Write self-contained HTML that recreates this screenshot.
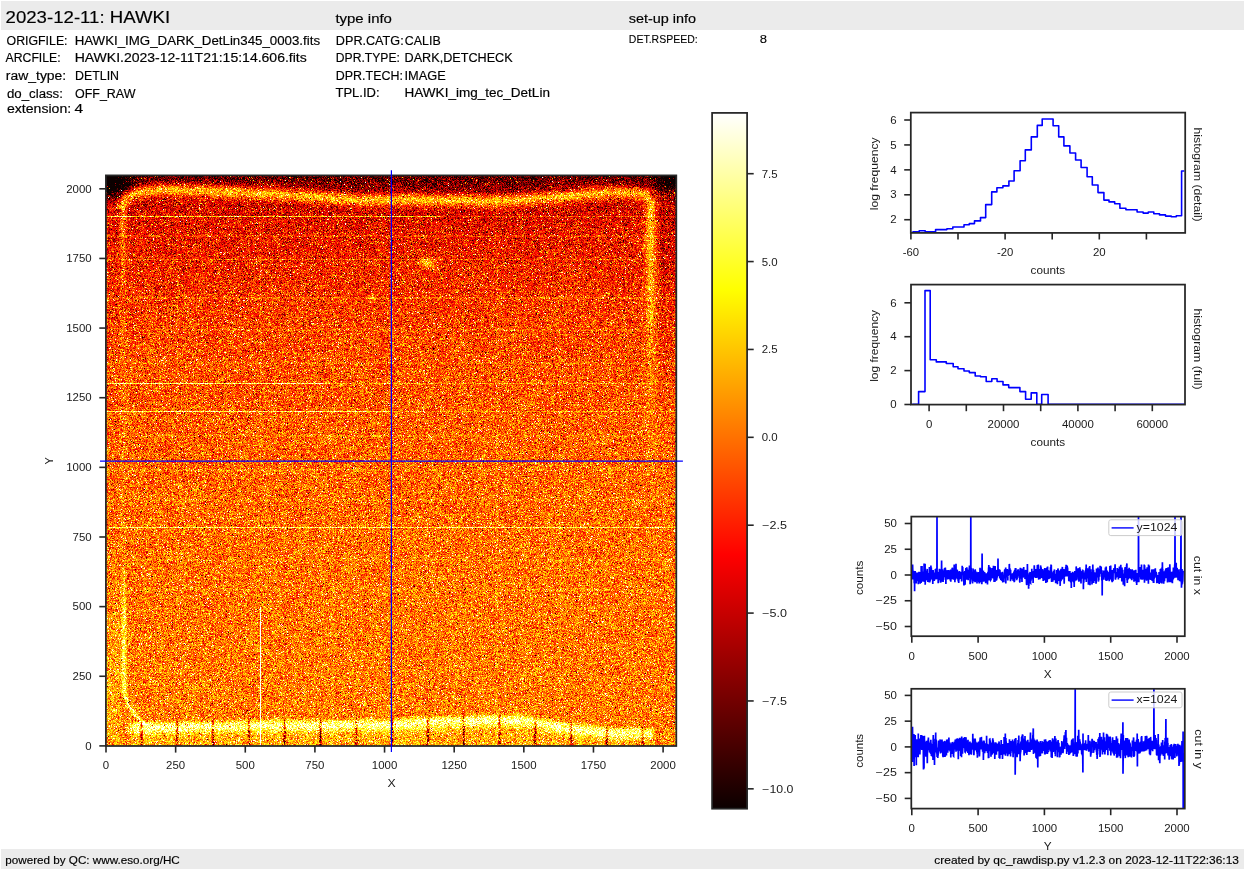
<!DOCTYPE html>
<html><head><meta charset="utf-8">
<style>
html,body{margin:0;padding:0;background:#fff;}
body{width:1245px;height:870px;position:relative;overflow:hidden;font-family:"Liberation Sans", sans-serif;}
.band{position:absolute;background:#ebebeb;}
#hm{position:absolute;left:106px;top:175px;width:570px;height:571px;background:linear-gradient(rgb(120,20,2) 0%,rgb(200,45,4) 4%,rgb(215,50,4) 10%,rgb(235,68,5) 20%,rgb(245,88,7) 30%,rgb(246,100,9) 40%,rgb(246,106,10) 50%,rgb(249,116,9) 60%,rgb(251,121,9) 70%,rgb(251,128,10) 85%,rgb(250,140,20) 92%,rgb(252,215,90) 95%,rgb(248,185,50) 100%);}
#cb{position:absolute;left:712px;top:113px;width:35px;height:696px;background:linear-gradient(to top, rgb(11,0,0) 0%, rgb(255,0,0) 36.5%, rgb(255,255,0) 74.6%, rgb(255,255,255) 100%);}
svg{position:absolute;left:0;top:0;}
text{font-family:"Liberation Sans", sans-serif;fill:#000;stroke:#000;stroke-width:0.16px;}
text.md{stroke-width:0.1px;}
text.sm{stroke:none;fill:#1a1a1a;}
</style></head><body>
<div class="band" style="left:1px;top:1px;width:1243px;height:28.5px"></div>
<div class="band" style="left:1px;top:849px;width:1243px;height:19.5px"></div>
<canvas id="hm" width="570" height="571"></canvas>
<div id="cb"></div>
<svg width="1245" height="870" viewBox="0 0 1245 870">
<path d="M911.6,232.2 H913.2 V231.8 H919.2 V230.8 H925.2 V231.8 H935.6 V229.6 H946.9 V228.8 H952.8 V227.0 H964.0 V224.8 H969.3 V223.6 H974.5 V220.9 H980.5 V217.6 H985.7 V204.6 H991.7 V191.9 H996.9 V187.7 H1002.9 V185.9 H1008.9 V181.0 H1014.1 V170.8 H1020.1 V160.8 H1025.3 V149.9 H1031.3 V136.9 H1037.3 V125.4 H1042.2 V119.0 H1053.1 V125.7 H1058.7 V136.9 H1063.9 V145.9 H1069.9 V153.0 H1075.6 V160.0 H1081.1 V167.5 H1087.1 V176.8 H1092.3 V185.0 H1098.0 V192.6 H1103.9 V200.1 H1109.0 V201.9 H1114.7 V203.8 H1119.9 V208.2 H1125.9 V209.8 H1137.1 V212.0 H1143.1 V213.1 H1148.3 V212.0 H1153.8 V213.8 H1159.5 V214.9 H1165.5 V216.1 H1171.2 V216.8 H1176.3 V215.8 H1181.6 V171.0 H1184.4" fill="none" stroke="#0000ff" stroke-width="1.6" stroke-linejoin="round"/>
<path d="M912.2,404.2 H918.6 V391.6 H925.0 V290.6 H930.2 V359.8 H936.3 V361.9 H946.3 V363.5 H953.2 V366.7 H958.0 V368.8 H964.0 V371.0 H969.3 V372.6 H975.2 V376.0 H980.5 V376.7 H986.2 V381.5 H991.8 V378.7 H997.1 V381.5 H1003.0 V384.9 H1008.7 V387.6 H1019.9 V391.6 H1025.6 V399.3 H1031.2 V392.9 H1036.8 V404.2 H1041.7 V394.5 H1048.1 V404.2 H1184.4" fill="none" stroke="#0000ff" stroke-width="1.6" stroke-linejoin="round"/>
<path d="M911.8,577.9 L911.9,575.6 L912.1,570.4 L912.2,574.2 L912.3,575.4 L912.5,579.4 L912.6,564.5 L912.7,568.4 L912.9,574.9 L913.0,572.4 L913.1,573.7 L913.3,579.5 L913.4,575.3 L913.5,570.7 L913.7,574.6 L913.8,579.5 L913.9,571.9 L914.1,575.4 L914.2,583.2 L914.3,577.9 L914.5,572.5 L914.6,591.2 L914.7,577.3 L914.8,571.7 L915.0,574.5 L915.1,574.3 L915.2,571.1 L915.4,579.8 L915.5,577.8 L915.6,577.9 L915.8,578.9 L915.9,580.2 L916.0,575.1 L916.2,583.5 L916.3,580.7 L916.4,575.9 L916.6,580.9 L916.7,575.9 L916.8,572.5 L917.0,577.1 L917.1,578.8 L917.2,573.5 L917.4,575.7 L917.5,575.6 L917.6,576.8 L917.8,577.9 L917.9,573.3 L918.0,572.5 L918.2,574.2 L918.3,584.2 L918.4,581.8 L918.6,576.9 L918.7,577.0 L918.8,578.4 L919.0,571.8 L919.1,574.2 L919.2,579.8 L919.4,578.0 L919.5,575.9 L919.6,576.6 L919.8,579.3 L919.9,572.9 L920.0,577.2 L920.2,583.8 L920.3,575.6 L920.4,578.3 L920.6,572.0 L920.7,578.1 L920.8,575.6 L920.9,576.8 L921.1,583.0 L921.2,565.9 L921.3,577.5 L921.5,569.3 L921.6,570.7 L921.7,571.9 L921.9,574.8 L922.0,566.1 L922.1,576.1 L922.3,581.1 L922.4,575.3 L922.5,575.4 L922.7,579.9 L922.8,579.8 L922.9,575.7 L923.1,577.4 L923.2,581.7 L923.3,580.4 L923.5,571.6 L923.6,575.7 L923.7,573.0 L923.9,578.6 L924.0,572.7 L924.1,563.5 L924.3,573.3 L924.4,579.2 L924.5,572.1 L924.7,569.8 L924.8,575.0 L924.9,582.0 L925.1,563.7 L925.2,584.8 L925.3,580.1 L925.5,577.7 L925.6,572.5 L925.7,577.1 L925.9,580.4 L926.0,577.6 L926.1,575.9 L926.3,575.8 L926.4,572.8 L926.5,579.1 L926.7,579.2 L926.8,571.7 L926.9,570.7 L927.0,571.7 L927.2,568.9 L927.3,572.9 L927.4,578.2 L927.6,577.2 L927.7,575.0 L927.8,582.1 L928.0,574.8 L928.1,574.2 L928.2,577.2 L928.4,574.0 L928.5,573.1 L928.6,576.3 L928.8,574.8 L928.9,577.7 L929.0,582.2 L929.2,577.7 L929.3,576.1 L929.4,567.0 L929.6,582.6 L929.7,576.2 L929.8,582.2 L930.0,577.8 L930.1,577.4 L930.2,580.6 L930.4,576.3 L930.5,580.0 L930.6,572.9 L930.8,574.4 L930.9,565.5 L931.0,571.2 L931.2,576.2 L931.3,567.5 L931.4,571.8 L931.6,574.1 L931.7,573.0 L931.8,578.7 L932.0,570.9 L932.1,570.0 L932.2,578.6 L932.4,579.1 L932.5,573.4 L932.6,571.7 L932.8,583.9 L932.9,574.0 L933.0,575.6 L933.1,570.0 L933.3,579.3 L933.4,576.6 L933.5,576.9 L933.7,572.9 L933.8,574.8 L933.9,580.1 L934.1,577.3 L934.2,574.6 L934.3,581.1 L934.5,573.8 L934.6,572.4 L934.7,577.8 L934.9,574.5 L935.0,575.4 L935.1,578.4 L935.3,574.2 L935.4,569.1 L935.5,574.8 L935.7,579.4 L935.8,577.2 L935.9,574.0 L936.1,568.6 L936.2,570.7 L936.3,577.6 L936.5,568.4 L936.6,577.0 L936.7,574.8 L936.9,575.0 L937.0,516.4 L937.1,573.3 L937.3,571.8 L937.4,579.1 L937.5,576.8 L937.7,573.8 L937.8,577.5 L937.9,572.9 L938.1,572.0 L938.2,583.2 L938.3,574.5 L938.5,575.9 L938.6,578.4 L938.7,578.6 L938.9,578.7 L939.0,578.9 L939.1,575.6 L939.2,579.0 L939.4,568.8 L939.5,580.2 L939.6,576.3 L939.8,570.1 L939.9,570.1 L940.0,573.2 L940.2,575.5 L940.3,570.4 L940.4,582.4 L940.6,579.8 L940.7,582.7 L940.8,577.0 L941.0,572.3 L941.1,571.7 L941.2,576.6 L941.4,581.8 L941.5,570.1 L941.6,560.6 L941.8,580.4 L941.9,578.5 L942.0,570.8 L942.2,572.3 L942.3,576.9 L942.4,571.5 L942.6,569.3 L942.7,580.3 L942.8,572.3 L943.0,578.2 L943.1,582.1 L943.2,574.7 L943.4,572.5 L943.5,579.7 L943.6,579.5 L943.8,575.5 L943.9,577.3 L944.0,572.1 L944.2,570.4 L944.3,577.1 L944.4,574.5 L944.6,568.1 L944.7,571.6 L944.8,573.3 L944.9,570.8 L945.1,570.9 L945.2,573.0 L945.3,567.5 L945.5,570.2 L945.6,570.3 L945.7,573.9 L945.9,584.0 L946.0,575.1 L946.1,577.6 L946.3,570.8 L946.4,574.0 L946.5,575.6 L946.7,576.9 L946.8,574.5 L946.9,570.2 L947.1,571.1 L947.2,573.8 L947.3,576.6 L947.5,577.2 L947.6,573.4 L947.7,579.4 L947.9,577.6 L948.0,578.6 L948.1,574.4 L948.3,576.2 L948.4,573.8 L948.5,574.7 L948.7,570.1 L948.8,578.5 L948.9,578.9 L949.1,572.0 L949.2,575.5 L949.3,571.1 L949.5,578.2 L949.6,577.0 L949.7,574.4 L949.9,570.5 L950.0,571.1 L950.1,579.8 L950.3,572.6 L950.4,580.8 L950.5,575.7 L950.7,569.6 L950.8,581.8 L950.9,578.8 L951.0,574.6 L951.2,575.1 L951.3,573.8 L951.4,574.4 L951.6,577.5 L951.7,576.3 L951.8,572.5 L952.0,579.1 L952.1,576.6 L952.2,567.8 L952.4,568.6 L952.5,573.6 L952.6,571.0 L952.8,574.6 L952.9,578.4 L953.0,573.8 L953.2,572.2 L953.3,575.1 L953.4,578.8 L953.6,579.4 L953.7,574.9 L953.8,575.5 L954.0,571.4 L954.1,573.1 L954.2,564.6 L954.4,579.5 L954.5,571.1 L954.6,577.9 L954.8,572.9 L954.9,582.2 L955.0,577.2 L955.2,576.9 L955.3,577.3 L955.4,579.6 L955.6,578.6 L955.7,575.5 L955.8,575.3 L956.0,563.8 L956.1,572.4 L956.2,575.2 L956.4,577.2 L956.5,578.4 L956.6,575.8 L956.8,569.6 L956.9,573.7 L957.0,575.7 L957.1,571.4 L957.3,569.8 L957.4,577.9 L957.5,574.4 L957.7,575.0 L957.8,579.2 L957.9,574.8 L958.1,578.8 L958.2,581.5 L958.3,576.3 L958.5,575.4 L958.6,571.9 L958.7,582.9 L958.9,576.0 L959.0,574.5 L959.1,571.9 L959.3,579.5 L959.4,570.9 L959.5,575.7 L959.7,571.5 L959.8,572.4 L959.9,573.8 L960.1,575.6 L960.2,575.3 L960.3,576.1 L960.5,579.0 L960.6,573.3 L960.7,574.6 L960.9,575.2 L961.0,578.1 L961.1,572.0 L961.3,577.7 L961.4,575.4 L961.5,574.0 L961.7,581.5 L961.8,578.3 L961.9,580.4 L962.1,572.6 L962.2,565.7 L962.3,574.4 L962.5,569.3 L962.6,572.3 L962.7,566.9 L962.9,575.2 L963.0,573.3 L963.1,574.4 L963.2,574.4 L963.4,573.3 L963.5,574.9 L963.6,571.9 L963.8,572.5 L963.9,585.4 L964.0,573.6 L964.2,585.2 L964.3,579.1 L964.4,577.2 L964.6,580.1 L964.7,577.1 L964.8,570.9 L965.0,580.3 L965.1,584.8 L965.2,577.3 L965.4,575.8 L965.5,574.9 L965.6,578.0 L965.8,569.4 L965.9,568.0 L966.0,578.8 L966.2,577.2 L966.3,574.5 L966.4,579.6 L966.6,574.6 L966.7,567.8 L966.8,567.3 L967.0,569.6 L967.1,576.5 L967.2,570.4 L967.4,569.5 L967.5,577.6 L967.6,574.5 L967.8,570.4 L967.9,574.0 L968.0,575.3 L968.2,580.2 L968.3,574.4 L968.4,570.3 L968.6,570.7 L968.7,571.9 L968.8,572.2 L969.0,573.0 L969.1,577.9 L969.2,569.8 L969.3,569.9 L969.5,565.6 L969.6,576.0 L969.7,568.9 L969.9,569.9 L970.0,570.2 L970.1,584.3 L970.3,577.3 L970.4,576.1 L970.5,574.0 L970.7,572.1 L970.8,516.4 L970.9,569.3 L971.1,567.9 L971.2,569.0 L971.3,576.5 L971.5,576.6 L971.6,579.5 L971.7,576.6 L971.9,576.7 L972.0,575.9 L972.1,580.0 L972.3,582.2 L972.4,576.5 L972.5,583.4 L972.7,581.0 L972.8,581.8 L972.9,574.0 L973.1,568.4 L973.2,577.3 L973.3,576.3 L973.5,573.8 L973.6,570.2 L973.7,576.8 L973.9,578.1 L974.0,573.4 L974.1,581.4 L974.3,579.0 L974.4,574.6 L974.5,572.0 L974.7,572.0 L974.8,578.0 L974.9,577.4 L975.1,582.2 L975.2,569.2 L975.3,580.5 L975.4,573.6 L975.6,570.7 L975.7,581.5 L975.8,575.5 L976.0,573.3 L976.1,574.1 L976.2,576.3 L976.4,573.7 L976.5,573.6 L976.6,577.3 L976.8,576.5 L976.9,573.6 L977.0,583.6 L977.2,575.5 L977.3,576.8 L977.4,574.2 L977.6,572.3 L977.7,573.2 L977.8,576.9 L978.0,574.0 L978.1,576.6 L978.2,573.9 L978.4,579.4 L978.5,575.9 L978.6,571.9 L978.8,581.3 L978.9,581.4 L979.0,574.8 L979.2,583.4 L979.3,578.6 L979.4,574.6 L979.6,578.6 L979.7,572.2 L979.8,579.6 L980.0,567.7 L980.1,571.0 L980.2,577.2 L980.4,573.4 L980.5,574.0 L980.6,568.5 L980.8,575.3 L980.9,582.0 L981.0,576.5 L981.1,582.2 L981.3,581.3 L981.4,583.1 L981.5,574.5 L981.7,569.4 L981.8,584.2 L981.9,582.9 L982.1,553.4 L982.2,572.5 L982.3,579.8 L982.5,572.9 L982.6,576.6 L982.7,577.0 L982.9,576.2 L983.0,573.0 L983.1,573.5 L983.3,570.8 L983.4,571.2 L983.5,581.7 L983.7,580.1 L983.8,578.3 L983.9,581.5 L984.1,579.1 L984.2,580.0 L984.3,574.3 L984.5,575.6 L984.6,572.1 L984.7,578.2 L984.9,575.5 L985.0,576.1 L985.1,577.4 L985.3,579.8 L985.4,580.6 L985.5,576.3 L985.7,583.2 L985.8,580.9 L985.9,580.1 L986.1,579.2 L986.2,573.3 L986.3,578.5 L986.5,575.7 L986.6,580.5 L986.7,579.4 L986.9,580.5 L987.0,576.5 L987.1,578.4 L987.2,578.2 L987.4,577.1 L987.5,584.5 L987.6,577.6 L987.8,576.6 L987.9,572.6 L988.0,571.8 L988.2,573.3 L988.3,577.5 L988.4,574.8 L988.6,567.4 L988.7,573.9 L988.8,565.0 L989.0,575.0 L989.1,574.6 L989.2,580.4 L989.4,570.1 L989.5,566.7 L989.6,577.6 L989.8,570.9 L989.9,575.3 L990.0,567.7 L990.2,568.3 L990.3,579.7 L990.4,574.0 L990.6,570.2 L990.7,571.7 L990.8,579.8 L991.0,579.5 L991.1,576.0 L991.2,572.3 L991.4,577.1 L991.5,571.2 L991.6,571.7 L991.8,571.9 L991.9,572.7 L992.0,567.9 L992.2,572.7 L992.3,572.4 L992.4,575.4 L992.6,568.4 L992.7,577.9 L992.8,570.7 L993.0,578.4 L993.1,569.8 L993.2,570.0 L993.3,571.1 L993.5,565.7 L993.6,572.1 L993.7,573.6 L993.9,577.9 L994.0,571.2 L994.1,581.9 L994.3,580.2 L994.4,574.6 L994.5,568.5 L994.7,572.5 L994.8,571.7 L994.9,582.1 L995.1,566.0 L995.2,571.2 L995.3,578.9 L995.5,572.6 L995.6,573.3 L995.7,580.3 L995.9,569.9 L996.0,571.3 L996.1,579.2 L996.3,580.4 L996.4,580.1 L996.5,574.4 L996.7,579.0 L996.8,579.0 L996.9,573.4 L997.1,577.7 L997.2,574.9 L997.3,571.3 L997.5,574.4 L997.6,570.1 L997.7,570.5 L997.9,571.1 L998.0,558.6 L998.1,570.8 L998.3,576.2 L998.4,571.9 L998.5,570.1 L998.7,569.6 L998.8,575.1 L998.9,569.0 L999.1,574.8 L999.2,570.7 L999.3,570.9 L999.4,574.5 L999.6,570.8 L999.7,578.6 L999.8,572.3 L1000.0,572.0 L1000.1,576.3 L1000.2,572.3 L1000.4,575.1 L1000.5,574.4 L1000.6,572.3 L1000.8,580.1 L1000.9,573.2 L1001.0,576.9 L1001.2,578.7 L1001.3,574.2 L1001.4,572.9 L1001.6,580.7 L1001.7,580.5 L1001.8,579.0 L1002.0,575.2 L1002.1,572.6 L1002.2,580.0 L1002.4,578.9 L1002.5,571.7 L1002.6,580.1 L1002.8,582.4 L1002.9,574.7 L1003.0,578.7 L1003.2,576.5 L1003.3,580.7 L1003.4,575.3 L1003.6,578.4 L1003.7,578.0 L1003.8,582.3 L1004.0,576.6 L1004.1,576.8 L1004.2,578.4 L1004.4,573.0 L1004.5,576.9 L1004.6,570.6 L1004.8,569.4 L1004.9,571.8 L1005.0,572.3 L1005.2,574.2 L1005.3,577.5 L1005.4,571.7 L1005.5,573.4 L1005.7,567.6 L1005.8,583.5 L1005.9,577.7 L1006.1,571.1 L1006.2,574.9 L1006.3,573.6 L1006.5,574.5 L1006.6,573.2 L1006.7,570.6 L1006.9,570.6 L1007.0,574.0 L1007.1,569.1 L1007.3,573.7 L1007.4,576.6 L1007.5,577.4 L1007.7,572.4 L1007.8,580.4 L1007.9,569.5 L1008.1,576.1 L1008.2,571.6 L1008.3,575.0 L1008.5,573.3 L1008.6,573.7 L1008.7,572.8 L1008.9,573.6 L1009.0,573.7 L1009.1,572.8 L1009.3,563.9 L1009.4,564.4 L1009.5,572.3 L1009.7,573.1 L1009.8,572.8 L1009.9,568.3 L1010.1,571.4 L1010.2,571.5 L1010.3,572.4 L1010.5,581.2 L1010.6,569.8 L1010.7,576.0 L1010.9,576.1 L1011.0,574.0 L1011.1,575.3 L1011.2,574.2 L1011.4,576.8 L1011.5,579.5 L1011.6,577.5 L1011.8,574.1 L1011.9,574.9 L1012.0,575.1 L1012.2,573.5 L1012.3,578.2 L1012.4,574.7 L1012.6,576.0 L1012.7,573.2 L1012.8,575.1 L1013.0,578.2 L1013.1,577.3 L1013.2,581.1 L1013.4,575.8 L1013.5,572.9 L1013.6,573.3 L1013.8,572.8 L1013.9,573.1 L1014.0,576.8 L1014.2,582.3 L1014.3,580.8 L1014.4,581.4 L1014.6,580.8 L1014.7,577.8 L1014.8,569.7 L1015.0,571.0 L1015.1,572.6 L1015.2,576.0 L1015.4,567.9 L1015.5,573.9 L1015.6,571.5 L1015.8,576.4 L1015.9,568.2 L1016.0,574.2 L1016.2,571.2 L1016.3,575.7 L1016.4,578.4 L1016.6,574.7 L1016.7,575.9 L1016.8,580.2 L1017.0,575.8 L1017.1,579.1 L1017.2,572.7 L1017.3,571.7 L1017.5,573.1 L1017.6,570.9 L1017.7,573.2 L1017.9,569.6 L1018.0,576.0 L1018.1,570.5 L1018.3,569.3 L1018.4,570.3 L1018.5,576.4 L1018.7,573.8 L1018.8,574.4 L1018.9,571.6 L1019.1,572.2 L1019.2,578.1 L1019.3,572.5 L1019.5,571.0 L1019.6,574.6 L1019.7,581.6 L1019.9,582.5 L1020.0,572.8 L1020.1,574.7 L1020.3,567.8 L1020.4,576.9 L1020.5,572.7 L1020.7,567.9 L1020.8,573.3 L1020.9,574.6 L1021.1,575.4 L1021.2,572.1 L1021.3,570.3 L1021.5,573.9 L1021.6,578.8 L1021.7,576.7 L1021.9,578.3 L1022.0,582.1 L1022.1,568.8 L1022.3,572.6 L1022.4,575.8 L1022.5,575.8 L1022.7,576.0 L1022.8,568.5 L1022.9,577.3 L1023.1,575.0 L1023.2,577.4 L1023.3,575.9 L1023.4,574.0 L1023.6,575.6 L1023.7,567.0 L1023.8,572.5 L1024.0,574.0 L1024.1,575.1 L1024.2,572.4 L1024.4,571.9 L1024.5,571.4 L1024.6,575.1 L1024.8,573.7 L1024.9,570.3 L1025.0,579.1 L1025.2,574.5 L1025.3,573.9 L1025.4,577.2 L1025.6,572.6 L1025.7,569.9 L1025.8,577.6 L1026.0,575.6 L1026.1,578.7 L1026.2,575.3 L1026.4,578.5 L1026.5,583.1 L1026.6,584.5 L1026.8,585.0 L1026.9,578.7 L1027.0,576.8 L1027.2,577.6 L1027.3,579.4 L1027.4,564.0 L1027.6,576.1 L1027.7,581.8 L1027.8,579.0 L1028.0,578.3 L1028.1,577.7 L1028.2,575.0 L1028.4,577.2 L1028.5,578.8 L1028.6,588.7 L1028.8,583.3 L1028.9,586.1 L1029.0,575.3 L1029.2,579.4 L1029.3,575.3 L1029.4,573.3 L1029.5,578.0 L1029.7,572.7 L1029.8,574.7 L1029.9,578.6 L1030.1,571.9 L1030.2,580.3 L1030.3,574.0 L1030.5,583.0 L1030.6,583.1 L1030.7,573.7 L1030.9,577.6 L1031.0,580.8 L1031.1,579.1 L1031.3,579.5 L1031.4,573.5 L1031.5,575.6 L1031.7,579.2 L1031.8,568.7 L1031.9,577.0 L1032.1,572.0 L1032.2,576.9 L1032.3,571.2 L1032.5,575.4 L1032.6,576.1 L1032.7,577.5 L1032.9,575.1 L1033.0,574.4 L1033.1,583.1 L1033.3,572.9 L1033.4,575.3 L1033.5,575.6 L1033.7,571.0 L1033.8,574.2 L1033.9,575.5 L1034.1,576.9 L1034.2,567.0 L1034.3,565.4 L1034.5,571.9 L1034.6,572.6 L1034.7,572.6 L1034.9,572.0 L1035.0,571.9 L1035.1,577.3 L1035.3,570.8 L1035.4,578.1 L1035.5,573.8 L1035.6,569.1 L1035.8,575.5 L1035.9,570.4 L1036.0,569.2 L1036.2,573.0 L1036.3,571.1 L1036.4,576.0 L1036.6,574.6 L1036.7,577.9 L1036.8,573.0 L1037.0,571.9 L1037.1,571.8 L1037.2,569.8 L1037.4,565.1 L1037.5,575.3 L1037.6,569.5 L1037.8,569.3 L1037.9,570.8 L1038.0,576.2 L1038.2,577.5 L1038.3,564.5 L1038.4,573.8 L1038.6,576.4 L1038.7,579.6 L1038.8,573.9 L1039.0,569.4 L1039.1,574.4 L1039.2,572.8 L1039.4,578.9 L1039.5,575.0 L1039.6,568.9 L1039.8,574.7 L1039.9,569.0 L1040.0,579.3 L1040.2,572.9 L1040.3,569.9 L1040.4,572.1 L1040.6,567.5 L1040.7,565.4 L1040.8,572.0 L1041.0,572.3 L1041.1,567.3 L1041.2,570.6 L1041.4,573.6 L1041.5,577.8 L1041.6,576.8 L1041.7,574.9 L1041.9,569.1 L1042.0,576.4 L1042.1,572.7 L1042.3,571.1 L1042.4,578.3 L1042.5,575.8 L1042.7,576.5 L1042.8,569.3 L1042.9,578.4 L1043.1,571.6 L1043.2,581.0 L1043.3,578.4 L1043.5,578.3 L1043.6,576.5 L1043.7,576.8 L1043.9,579.0 L1044.0,575.8 L1044.1,580.5 L1044.3,575.8 L1044.4,575.2 L1044.5,571.5 L1044.7,568.9 L1044.8,568.0 L1044.9,568.8 L1045.1,579.7 L1045.2,568.2 L1045.3,574.2 L1045.5,577.7 L1045.6,576.1 L1045.7,574.5 L1045.9,583.0 L1046.0,576.0 L1046.1,574.3 L1046.3,570.3 L1046.4,574.1 L1046.5,575.3 L1046.7,578.4 L1046.8,575.9 L1046.9,567.5 L1047.1,576.2 L1047.2,582.2 L1047.3,578.5 L1047.4,578.5 L1047.6,566.4 L1047.7,575.6 L1047.8,570.2 L1048.0,572.3 L1048.1,574.1 L1048.2,571.1 L1048.4,577.4 L1048.5,574.7 L1048.6,579.2 L1048.8,577.4 L1048.9,577.0 L1049.0,571.5 L1049.2,570.6 L1049.3,573.5 L1049.4,578.7 L1049.6,574.9 L1049.7,575.0 L1049.8,574.8 L1050.0,574.3 L1050.1,577.0 L1050.2,571.7 L1050.4,575.2 L1050.5,567.2 L1050.6,576.6 L1050.8,577.9 L1050.9,572.2 L1051.0,564.6 L1051.2,571.7 L1051.3,565.0 L1051.4,576.8 L1051.6,582.0 L1051.7,573.4 L1051.8,574.9 L1052.0,577.9 L1052.1,572.8 L1052.2,572.3 L1052.4,577.6 L1052.5,580.8 L1052.6,579.5 L1052.8,581.8 L1052.9,573.6 L1053.0,577.2 L1053.2,578.7 L1053.3,579.4 L1053.4,575.3 L1053.5,570.8 L1053.7,579.6 L1053.8,580.2 L1053.9,575.0 L1054.1,580.0 L1054.2,575.7 L1054.3,574.9 L1054.5,569.4 L1054.6,579.4 L1054.7,576.2 L1054.9,576.7 L1055.0,577.3 L1055.1,580.3 L1055.3,573.9 L1055.4,575.3 L1055.5,576.7 L1055.7,583.2 L1055.8,575.8 L1055.9,575.9 L1056.1,579.2 L1056.2,574.8 L1056.3,581.3 L1056.5,579.4 L1056.6,575.1 L1056.7,569.9 L1056.9,574.7 L1057.0,578.5 L1057.1,576.9 L1057.3,570.7 L1057.4,584.3 L1057.5,581.7 L1057.7,579.5 L1057.8,577.2 L1057.9,568.5 L1058.1,569.8 L1058.2,577.4 L1058.3,580.9 L1058.5,573.7 L1058.6,575.1 L1058.7,579.3 L1058.9,578.6 L1059.0,575.2 L1059.1,578.6 L1059.3,575.5 L1059.4,575.3 L1059.5,570.5 L1059.6,580.2 L1059.8,572.7 L1059.9,575.4 L1060.0,580.0 L1060.2,585.9 L1060.3,575.8 L1060.4,573.1 L1060.6,580.9 L1060.7,569.6 L1060.8,577.8 L1061.0,581.2 L1061.1,578.8 L1061.2,568.7 L1061.4,572.1 L1061.5,575.4 L1061.6,576.1 L1061.8,571.2 L1061.9,572.5 L1062.0,577.7 L1062.2,579.5 L1062.3,567.4 L1062.4,566.9 L1062.6,578.4 L1062.7,576.4 L1062.8,577.7 L1063.0,575.7 L1063.1,574.0 L1063.2,572.2 L1063.4,572.4 L1063.5,577.6 L1063.6,569.7 L1063.8,572.9 L1063.9,569.0 L1064.0,572.8 L1064.2,583.8 L1064.3,576.0 L1064.4,573.3 L1064.6,577.1 L1064.7,569.8 L1064.8,575.9 L1065.0,569.9 L1065.1,574.1 L1065.2,572.1 L1065.4,574.7 L1065.5,575.9 L1065.6,575.3 L1065.7,566.9 L1065.9,570.4 L1066.0,572.4 L1066.1,564.7 L1066.3,575.2 L1066.4,571.5 L1066.5,576.4 L1066.7,574.0 L1066.8,575.2 L1066.9,571.1 L1067.1,575.8 L1067.2,565.6 L1067.3,572.4 L1067.5,570.1 L1067.6,567.5 L1067.7,573.2 L1067.9,572.8 L1068.0,575.7 L1068.1,576.4 L1068.3,575.8 L1068.4,572.8 L1068.5,573.8 L1068.7,573.3 L1068.8,581.2 L1068.9,572.3 L1069.1,570.9 L1069.2,579.2 L1069.3,575.7 L1069.5,578.0 L1069.6,574.2 L1069.7,572.9 L1069.9,571.1 L1070.0,576.4 L1070.1,573.2 L1070.3,575.9 L1070.4,575.9 L1070.5,582.1 L1070.7,575.9 L1070.8,582.8 L1070.9,579.9 L1071.1,576.7 L1071.2,575.1 L1071.3,587.9 L1071.5,576.6 L1071.6,578.8 L1071.7,572.9 L1071.8,582.0 L1072.0,580.1 L1072.1,574.7 L1072.2,577.7 L1072.4,575.3 L1072.5,571.8 L1072.6,575.8 L1072.8,572.3 L1072.9,580.9 L1073.0,578.4 L1073.2,574.9 L1073.3,576.2 L1073.4,573.7 L1073.6,574.3 L1073.7,574.9 L1073.8,582.5 L1074.0,574.4 L1074.1,581.2 L1074.2,587.1 L1074.4,572.6 L1074.5,581.7 L1074.6,578.4 L1074.8,570.9 L1074.9,576.7 L1075.0,578.3 L1075.2,579.0 L1075.3,580.8 L1075.4,571.2 L1075.6,576.8 L1075.7,576.3 L1075.8,575.1 L1076.0,571.0 L1076.1,578.5 L1076.2,566.4 L1076.4,571.6 L1076.5,579.3 L1076.6,577.5 L1076.8,580.4 L1076.9,572.7 L1077.0,578.9 L1077.2,575.0 L1077.3,570.8 L1077.4,576.7 L1077.5,568.7 L1077.7,572.2 L1077.8,572.1 L1077.9,568.4 L1078.1,576.7 L1078.2,569.8 L1078.3,570.4 L1078.5,568.2 L1078.6,570.7 L1078.7,571.4 L1078.9,581.7 L1079.0,572.2 L1079.1,572.3 L1079.3,572.3 L1079.4,581.3 L1079.5,568.6 L1079.7,572.4 L1079.8,567.3 L1079.9,571.3 L1080.1,573.4 L1080.2,572.1 L1080.3,569.3 L1080.5,578.8 L1080.6,577.2 L1080.7,571.3 L1080.9,575.8 L1081.0,583.6 L1081.1,578.6 L1081.3,575.6 L1081.4,571.2 L1081.5,576.0 L1081.7,575.0 L1081.8,578.8 L1081.9,577.3 L1082.1,573.0 L1082.2,570.7 L1082.3,572.5 L1082.5,571.1 L1082.6,574.5 L1082.7,571.1 L1082.9,570.6 L1083.0,570.7 L1083.1,575.8 L1083.3,577.9 L1083.4,589.2 L1083.5,573.6 L1083.6,578.2 L1083.8,582.8 L1083.9,579.3 L1084.0,573.4 L1084.2,573.5 L1084.3,573.6 L1084.4,576.6 L1084.6,579.4 L1084.7,577.3 L1084.8,575.3 L1085.0,576.2 L1085.1,578.6 L1085.2,570.5 L1085.4,578.8 L1085.5,577.7 L1085.6,575.8 L1085.8,576.4 L1085.9,568.6 L1086.0,571.7 L1086.2,564.6 L1086.3,582.1 L1086.4,576.2 L1086.6,571.7 L1086.7,574.3 L1086.8,568.1 L1087.0,575.2 L1087.1,573.1 L1087.2,578.4 L1087.4,572.2 L1087.5,576.1 L1087.6,569.3 L1087.8,573.3 L1087.9,568.4 L1088.0,574.3 L1088.2,574.3 L1088.3,576.9 L1088.4,584.7 L1088.6,582.3 L1088.7,578.4 L1088.8,575.4 L1089.0,577.1 L1089.1,567.2 L1089.2,573.1 L1089.4,574.6 L1089.5,574.1 L1089.6,573.9 L1089.7,566.1 L1089.9,572.5 L1090.0,585.3 L1090.1,572.9 L1090.3,575.1 L1090.4,580.7 L1090.5,570.3 L1090.7,576.1 L1090.8,574.4 L1090.9,569.2 L1091.1,581.3 L1091.2,575.8 L1091.3,577.4 L1091.5,572.4 L1091.6,574.9 L1091.7,575.2 L1091.9,572.2 L1092.0,584.5 L1092.1,572.7 L1092.3,576.3 L1092.4,579.2 L1092.5,578.7 L1092.7,578.6 L1092.8,564.4 L1092.9,569.6 L1093.1,573.7 L1093.2,576.5 L1093.3,574.3 L1093.5,569.9 L1093.6,572.1 L1093.7,582.9 L1093.9,575.1 L1094.0,579.1 L1094.1,578.7 L1094.3,574.2 L1094.4,577.8 L1094.5,572.3 L1094.7,575.8 L1094.8,580.0 L1094.9,578.3 L1095.1,576.7 L1095.2,573.1 L1095.3,580.8 L1095.5,579.9 L1095.6,577.1 L1095.7,578.8 L1095.8,578.2 L1096.0,583.7 L1096.1,572.5 L1096.2,583.6 L1096.4,574.4 L1096.5,568.6 L1096.6,571.3 L1096.8,571.1 L1096.9,573.9 L1097.0,572.3 L1097.2,571.0 L1097.3,573.1 L1097.4,576.1 L1097.6,570.7 L1097.7,577.4 L1097.8,573.0 L1098.0,567.5 L1098.1,574.0 L1098.2,572.2 L1098.4,581.6 L1098.5,578.5 L1098.6,574.9 L1098.8,580.6 L1098.9,572.4 L1099.0,569.0 L1099.2,572.5 L1099.3,572.6 L1099.4,569.4 L1099.6,576.8 L1099.7,570.1 L1099.8,573.9 L1100.0,571.8 L1100.1,565.8 L1100.2,569.2 L1100.4,566.6 L1100.5,571.2 L1100.6,570.1 L1100.8,567.3 L1100.9,573.7 L1101.0,570.3 L1101.2,566.6 L1101.3,573.0 L1101.4,573.1 L1101.6,569.9 L1101.7,573.3 L1101.8,580.4 L1101.9,574.9 L1102.1,576.3 L1102.2,595.6 L1102.3,576.5 L1102.5,576.5 L1102.6,576.9 L1102.7,574.3 L1102.9,577.2 L1103.0,574.1 L1103.1,573.4 L1103.3,575.1 L1103.4,577.2 L1103.5,570.6 L1103.7,573.6 L1103.8,579.8 L1103.9,572.9 L1104.1,573.3 L1104.2,574.0 L1104.3,574.4 L1104.5,572.2 L1104.6,570.6 L1104.7,575.0 L1104.9,571.5 L1105.0,572.6 L1105.1,571.4 L1105.3,577.4 L1105.4,567.6 L1105.5,574.0 L1105.7,576.6 L1105.8,580.5 L1105.9,575.1 L1106.1,572.9 L1106.2,566.4 L1106.3,575.5 L1106.5,580.9 L1106.6,580.2 L1106.7,571.1 L1106.9,575.1 L1107.0,579.7 L1107.1,580.5 L1107.3,570.5 L1107.4,577.4 L1107.5,574.6 L1107.7,573.0 L1107.8,576.3 L1107.9,571.8 L1108.0,577.6 L1108.2,572.2 L1108.3,574.9 L1108.4,578.1 L1108.6,573.0 L1108.7,579.7 L1108.8,572.3 L1109.0,575.4 L1109.1,574.9 L1109.2,581.2 L1109.4,575.5 L1109.5,574.4 L1109.6,572.9 L1109.8,576.4 L1109.9,565.9 L1110.0,574.9 L1110.2,576.7 L1110.3,574.4 L1110.4,576.5 L1110.6,576.5 L1110.7,565.6 L1110.8,577.1 L1111.0,579.5 L1111.1,577.7 L1111.2,574.3 L1111.4,573.9 L1111.5,579.7 L1111.6,574.9 L1111.8,581.2 L1111.9,577.2 L1112.0,570.1 L1112.2,582.3 L1112.3,575.6 L1112.4,577.4 L1112.6,573.3 L1112.7,573.7 L1112.8,574.0 L1113.0,581.2 L1113.1,573.8 L1113.2,570.9 L1113.4,571.5 L1113.5,570.2 L1113.6,569.8 L1113.7,571.9 L1113.9,568.4 L1114.0,572.1 L1114.1,569.0 L1114.3,570.9 L1114.4,573.2 L1114.5,568.1 L1114.7,572.6 L1114.8,572.7 L1114.9,568.1 L1115.1,564.2 L1115.2,574.3 L1115.3,578.6 L1115.5,579.7 L1115.6,572.1 L1115.7,573.7 L1115.9,578.3 L1116.0,574.9 L1116.1,576.7 L1116.3,574.1 L1116.4,575.0 L1116.5,574.1 L1116.7,575.0 L1116.8,572.0 L1116.9,575.0 L1117.1,577.2 L1117.2,568.1 L1117.3,568.7 L1117.5,572.1 L1117.6,572.5 L1117.7,571.5 L1117.9,574.1 L1118.0,569.0 L1118.1,573.4 L1118.3,569.9 L1118.4,579.4 L1118.5,571.8 L1118.7,571.6 L1118.8,571.2 L1118.9,569.3 L1119.1,570.4 L1119.2,578.0 L1119.3,568.8 L1119.5,566.6 L1119.6,569.0 L1119.7,573.5 L1119.8,573.6 L1120.0,574.7 L1120.1,576.2 L1120.2,571.8 L1120.4,578.0 L1120.5,574.5 L1120.6,570.2 L1120.8,564.7 L1120.9,573.6 L1121.0,570.9 L1121.2,577.4 L1121.3,573.7 L1121.4,575.8 L1121.6,575.8 L1121.7,574.6 L1121.8,581.4 L1122.0,567.6 L1122.1,576.5 L1122.2,578.6 L1122.4,578.5 L1122.5,577.9 L1122.6,575.6 L1122.8,569.8 L1122.9,580.9 L1123.0,575.6 L1123.2,576.2 L1123.3,584.8 L1123.4,579.3 L1123.6,578.7 L1123.7,577.2 L1123.8,574.3 L1124.0,577.1 L1124.1,577.3 L1124.2,576.3 L1124.4,573.4 L1124.5,582.1 L1124.6,586.3 L1124.8,575.8 L1124.9,570.2 L1125.0,570.3 L1125.2,567.0 L1125.3,571.6 L1125.4,572.7 L1125.6,569.7 L1125.7,571.2 L1125.8,576.0 L1125.9,574.2 L1126.1,576.8 L1126.2,576.2 L1126.3,577.9 L1126.5,569.1 L1126.6,564.7 L1126.7,569.6 L1126.9,563.4 L1127.0,580.3 L1127.1,574.1 L1127.3,582.9 L1127.4,578.7 L1127.5,572.0 L1127.7,577.2 L1127.8,572.8 L1127.9,577.3 L1128.1,570.7 L1128.2,579.6 L1128.3,572.0 L1128.5,569.0 L1128.6,575.7 L1128.7,577.9 L1128.9,569.6 L1129.0,571.0 L1129.1,567.7 L1129.3,577.9 L1129.4,573.0 L1129.5,573.3 L1129.7,575.2 L1129.8,578.1 L1129.9,569.0 L1130.1,574.1 L1130.2,577.9 L1130.3,573.6 L1130.5,578.6 L1130.6,569.4 L1130.7,570.7 L1130.9,573.2 L1131.0,570.0 L1131.1,574.2 L1131.3,576.2 L1131.4,571.9 L1131.5,572.3 L1131.7,580.3 L1131.8,575.4 L1131.9,577.6 L1132.0,574.3 L1132.2,569.3 L1132.3,575.3 L1132.4,573.3 L1132.6,577.3 L1132.7,577.8 L1132.8,570.6 L1133.0,576.4 L1133.1,572.2 L1133.2,576.3 L1133.4,578.2 L1133.5,574.8 L1133.6,579.6 L1133.8,577.5 L1133.9,579.1 L1134.0,581.7 L1134.2,570.3 L1134.3,576.1 L1134.4,574.7 L1134.6,576.0 L1134.7,574.4 L1134.8,578.9 L1135.0,578.6 L1135.1,573.8 L1135.2,581.1 L1135.4,579.1 L1135.5,573.7 L1135.6,574.7 L1135.8,569.7 L1135.9,578.6 L1136.0,576.8 L1136.2,581.3 L1136.3,579.2 L1136.4,583.1 L1136.6,573.2 L1136.7,585.1 L1136.8,575.2 L1137.0,577.7 L1137.1,582.2 L1137.2,580.5 L1137.4,573.0 L1137.5,579.9 L1137.6,574.6 L1137.8,578.2 L1137.9,578.0 L1138.0,580.0 L1138.1,576.5 L1138.3,578.0 L1138.4,577.0 L1138.5,516.4 L1138.7,581.6 L1138.8,582.2 L1138.9,579.3 L1139.1,575.6 L1139.2,571.9 L1139.3,575.3 L1139.5,572.4 L1139.6,573.2 L1139.7,576.8 L1139.9,566.9 L1140.0,574.5 L1140.1,568.3 L1140.3,573.2 L1140.4,572.6 L1140.5,576.0 L1140.7,570.0 L1140.8,573.5 L1140.9,579.6 L1141.1,568.8 L1141.2,573.5 L1141.3,578.0 L1141.5,564.5 L1141.6,571.2 L1141.7,575.2 L1141.9,578.4 L1142.0,573.6 L1142.1,579.7 L1142.3,576.6 L1142.4,579.0 L1142.5,578.8 L1142.7,575.4 L1142.8,571.5 L1142.9,573.1 L1143.1,577.1 L1143.2,569.7 L1143.3,576.8 L1143.5,575.4 L1143.6,579.5 L1143.7,570.7 L1143.8,574.3 L1144.0,576.4 L1144.1,577.7 L1144.2,564.4 L1144.4,575.1 L1144.5,582.7 L1144.6,565.2 L1144.8,575.8 L1144.9,579.7 L1145.0,575.1 L1145.2,577.4 L1145.3,575.2 L1145.4,568.8 L1145.6,571.2 L1145.7,574.3 L1145.8,578.0 L1146.0,572.4 L1146.1,574.8 L1146.2,577.5 L1146.4,573.2 L1146.5,580.7 L1146.6,570.7 L1146.8,577.2 L1146.9,573.9 L1147.0,573.7 L1147.2,567.4 L1147.3,567.8 L1147.4,570.0 L1147.6,571.0 L1147.7,578.7 L1147.8,569.7 L1148.0,574.2 L1148.1,579.9 L1148.2,567.9 L1148.4,583.8 L1148.5,564.5 L1148.6,573.2 L1148.8,573.8 L1148.9,579.8 L1149.0,573.2 L1149.2,579.8 L1149.3,565.5 L1149.4,579.5 L1149.6,576.7 L1149.7,579.6 L1149.8,575.6 L1149.9,579.8 L1150.1,577.5 L1150.2,572.6 L1150.3,574.4 L1150.5,579.5 L1150.6,577.0 L1150.7,572.6 L1150.9,574.6 L1151.0,579.9 L1151.1,578.3 L1151.3,575.6 L1151.4,575.8 L1151.5,576.2 L1151.7,572.8 L1151.8,569.8 L1151.9,575.8 L1152.1,569.4 L1152.2,581.0 L1152.3,575.9 L1152.5,580.7 L1152.6,572.9 L1152.7,576.7 L1152.9,571.5 L1153.0,576.1 L1153.1,574.2 L1153.3,582.7 L1153.4,569.2 L1153.5,578.3 L1153.7,577.4 L1153.8,583.1 L1153.9,576.3 L1154.1,573.8 L1154.2,578.8 L1154.3,574.7 L1154.5,571.9 L1154.6,573.4 L1154.7,569.3 L1154.9,572.1 L1155.0,571.8 L1155.1,574.6 L1155.3,568.3 L1155.4,573.2 L1155.5,575.9 L1155.7,574.7 L1155.8,574.4 L1155.9,572.6 L1156.0,577.3 L1156.2,571.7 L1156.3,577.9 L1156.4,572.7 L1156.6,575.1 L1156.7,576.5 L1156.8,583.2 L1157.0,578.1 L1157.1,582.3 L1157.2,580.1 L1157.4,581.8 L1157.5,582.8 L1157.6,578.2 L1157.8,575.0 L1157.9,576.9 L1158.0,577.9 L1158.2,575.4 L1158.3,578.4 L1158.4,576.0 L1158.6,575.8 L1158.7,576.8 L1158.8,575.6 L1159.0,574.4 L1159.1,572.1 L1159.2,583.9 L1159.4,577.7 L1159.5,583.1 L1159.6,579.9 L1159.8,578.4 L1159.9,575.0 L1160.0,572.0 L1160.2,582.8 L1160.3,569.5 L1160.4,569.1 L1160.6,574.3 L1160.7,575.8 L1160.8,572.4 L1161.0,568.6 L1161.1,573.3 L1161.2,572.7 L1161.4,582.8 L1161.5,574.5 L1161.6,573.8 L1161.8,583.5 L1161.9,577.1 L1162.0,572.8 L1162.1,567.3 L1162.3,573.2 L1162.4,562.3 L1162.5,570.5 L1162.7,568.9 L1162.8,574.3 L1162.9,573.5 L1163.1,574.3 L1163.2,579.7 L1163.3,576.9 L1163.5,577.3 L1163.6,582.5 L1163.7,583.7 L1163.9,577.1 L1164.0,578.4 L1164.1,577.5 L1164.3,571.3 L1164.4,571.8 L1164.5,581.2 L1164.7,576.7 L1164.8,572.7 L1164.9,575.4 L1165.1,575.4 L1165.2,573.8 L1165.3,570.3 L1165.5,572.1 L1165.6,574.7 L1165.7,570.1 L1165.9,568.6 L1166.0,573.6 L1166.1,578.3 L1166.3,574.7 L1166.4,573.9 L1166.5,568.0 L1166.7,572.2 L1166.8,568.3 L1166.9,572.2 L1167.1,577.0 L1167.2,576.5 L1167.3,571.9 L1167.5,582.4 L1167.6,571.9 L1167.7,580.8 L1167.9,576.2 L1168.0,573.0 L1168.1,574.5 L1168.2,567.3 L1168.4,569.7 L1168.5,579.3 L1168.6,571.7 L1168.8,567.9 L1168.9,572.8 L1169.0,576.2 L1169.2,577.8 L1169.3,582.2 L1169.4,568.8 L1169.6,579.4 L1169.7,574.0 L1169.8,564.3 L1170.0,570.0 L1170.1,573.1 L1170.2,574.9 L1170.4,576.4 L1170.5,576.7 L1170.6,573.4 L1170.8,582.2 L1170.9,574.8 L1171.0,576.2 L1171.2,575.0 L1171.3,581.3 L1171.4,574.1 L1171.6,572.0 L1171.7,578.0 L1171.8,577.8 L1172.0,573.9 L1172.1,582.5 L1172.2,571.4 L1172.4,583.2 L1172.5,574.6 L1172.6,580.3 L1172.8,577.5 L1172.9,575.5 L1173.0,575.8 L1173.2,579.4 L1173.3,572.3 L1173.4,567.4 L1173.6,570.5 L1173.7,574.7 L1173.8,576.8 L1174.0,578.2 L1174.1,575.2 L1174.2,571.7 L1174.3,571.2 L1174.5,575.2 L1174.6,571.8 L1174.7,564.6 L1174.9,567.1 L1175.0,516.4 L1175.1,565.8 L1175.3,569.1 L1175.4,576.2 L1175.5,570.1 L1175.7,575.7 L1175.8,577.7 L1175.9,570.0 L1176.1,564.0 L1176.2,562.8 L1176.3,572.2 L1176.5,568.7 L1176.6,574.7 L1176.7,569.5 L1176.9,570.2 L1177.0,575.0 L1177.1,567.9 L1177.3,571.4 L1177.4,571.9 L1177.5,577.4 L1177.7,574.4 L1177.8,574.5 L1177.9,577.2 L1178.1,580.2 L1178.2,573.3 L1178.3,573.1 L1178.5,570.1 L1178.6,570.9 L1178.7,576.8 L1178.9,576.8 L1179.0,569.3 L1179.1,578.9 L1179.3,576.6 L1179.4,577.8 L1179.5,574.8 L1179.7,581.2 L1179.8,573.5 L1179.9,575.9 L1180.0,575.3 L1180.2,580.8 L1180.3,574.7 L1180.4,577.4 L1180.6,576.3 L1180.7,573.3 L1180.8,570.8 L1181.0,516.4 L1181.1,579.1 L1181.2,582.3 L1181.4,579.7 L1181.5,587.7 L1181.6,581.7 L1181.8,585.4 L1181.9,577.9 L1182.0,569.0 L1182.2,578.3 L1182.3,572.1 L1182.4,583.6 L1182.6,578.1 L1182.7,581.8 L1182.8,579.7 L1183.0,573.7 L1183.1,571.3 L1183.2,570.7" fill="none" stroke="#0000ff" stroke-width="1.7" stroke-linejoin="miter"/>
<path d="M911.8,758.9 L911.9,752.7 L912.1,741.4 L912.2,755.0 L912.3,762.1 L912.5,726.7 L912.6,735.2 L912.7,752.0 L912.9,743.9 L913.0,741.6 L913.1,752.6 L913.3,758.6 L913.4,745.5 L913.5,744.4 L913.7,756.9 L913.8,750.6 L913.9,734.0 L914.1,766.0 L914.2,738.7 L914.3,750.0 L914.5,752.6 L914.6,748.3 L914.7,735.5 L914.8,756.7 L915.0,748.6 L915.1,738.5 L915.2,735.1 L915.4,745.1 L915.5,750.5 L915.6,757.3 L915.8,740.2 L915.9,753.0 L916.0,756.0 L916.2,745.8 L916.3,765.2 L916.4,743.9 L916.6,742.4 L916.7,743.0 L916.8,739.2 L917.0,757.0 L917.1,746.7 L917.2,743.0 L917.4,746.0 L917.5,742.5 L917.6,740.9 L917.8,756.5 L917.9,747.8 L918.0,751.6 L918.2,757.2 L918.3,733.4 L918.4,747.3 L918.6,746.8 L918.7,742.9 L918.8,751.3 L919.0,754.3 L919.1,743.4 L919.2,746.9 L919.4,739.7 L919.5,748.2 L919.6,744.6 L919.8,738.6 L919.9,754.6 L920.0,750.6 L920.2,747.7 L920.3,745.0 L920.4,739.0 L920.6,748.3 L920.7,741.6 L920.8,747.1 L920.9,735.1 L921.1,737.7 L921.2,745.4 L921.3,741.6 L921.5,745.9 L921.6,737.1 L921.7,735.0 L921.9,749.9 L922.0,744.6 L922.1,741.2 L922.3,742.7 L922.4,739.8 L922.5,736.3 L922.7,745.0 L922.8,749.0 L922.9,735.9 L923.1,748.1 L923.2,746.5 L923.3,750.8 L923.5,769.6 L923.6,750.1 L923.7,737.6 L923.9,748.3 L924.0,768.5 L924.1,756.2 L924.3,738.2 L924.4,735.7 L924.5,746.3 L924.7,749.6 L924.8,754.3 L924.9,748.9 L925.1,748.6 L925.2,753.0 L925.3,752.7 L925.5,746.7 L925.6,748.7 L925.7,752.9 L925.9,756.7 L926.0,742.0 L926.1,750.3 L926.3,749.3 L926.4,740.7 L926.5,749.7 L926.7,743.5 L926.8,750.0 L926.9,749.0 L927.0,750.8 L927.2,756.5 L927.3,763.2 L927.4,753.4 L927.6,749.6 L927.7,748.0 L927.8,748.3 L928.0,750.2 L928.1,739.5 L928.2,748.8 L928.4,737.6 L928.5,743.4 L928.6,741.1 L928.8,748.7 L928.9,744.1 L929.0,746.8 L929.2,743.0 L929.3,746.3 L929.4,742.5 L929.6,752.6 L929.7,748.9 L929.8,746.7 L930.0,748.9 L930.1,743.7 L930.2,750.4 L930.4,748.3 L930.5,753.0 L930.6,753.1 L930.8,739.7 L930.9,751.1 L931.0,742.7 L931.2,746.2 L931.3,748.3 L931.4,755.9 L931.6,749.1 L931.7,752.8 L931.8,748.8 L932.0,746.9 L932.1,745.8 L932.2,747.3 L932.4,756.7 L932.5,748.8 L932.6,743.9 L932.8,748.8 L932.9,744.4 L933.0,760.1 L933.1,741.9 L933.3,735.1 L933.4,754.9 L933.5,750.0 L933.7,745.8 L933.8,745.3 L933.9,754.2 L934.1,748.1 L934.2,746.1 L934.3,745.4 L934.5,764.9 L934.6,751.3 L934.7,754.3 L934.9,742.2 L935.0,751.0 L935.1,738.8 L935.3,746.2 L935.4,751.8 L935.5,752.2 L935.7,732.5 L935.8,749.5 L935.9,741.7 L936.1,739.5 L936.2,742.5 L936.3,748.6 L936.5,748.5 L936.6,747.7 L936.7,748.8 L936.9,753.3 L937.0,753.9 L937.1,756.9 L937.3,751.6 L937.4,752.3 L937.5,751.1 L937.7,752.5 L937.8,758.0 L937.9,753.4 L938.1,755.9 L938.2,748.5 L938.3,744.7 L938.5,740.5 L938.6,748.7 L938.7,751.1 L938.9,749.8 L939.0,748.8 L939.1,747.0 L939.2,750.7 L939.4,751.3 L939.5,747.7 L939.6,742.1 L939.8,744.1 L939.9,748.6 L940.0,745.1 L940.2,739.4 L940.3,746.0 L940.4,753.5 L940.6,743.4 L940.7,740.8 L940.8,744.8 L941.0,743.5 L941.1,740.3 L941.2,740.5 L941.4,739.8 L941.5,748.4 L941.6,752.6 L941.8,748.3 L941.9,744.6 L942.0,739.6 L942.2,747.9 L942.3,752.5 L942.4,750.8 L942.6,748.5 L942.7,746.0 L942.8,756.6 L943.0,741.6 L943.1,757.2 L943.2,747.5 L943.4,753.5 L943.5,752.5 L943.6,748.2 L943.8,751.9 L943.9,753.9 L944.0,748.6 L944.2,756.2 L944.3,746.6 L944.4,742.9 L944.6,757.1 L944.7,741.4 L944.8,741.0 L944.9,742.5 L945.1,742.9 L945.2,756.8 L945.3,753.3 L945.5,754.5 L945.6,748.6 L945.7,742.3 L945.9,754.6 L946.0,744.9 L946.1,744.8 L946.3,746.3 L946.4,755.4 L946.5,749.0 L946.7,739.4 L946.8,743.4 L946.9,750.1 L947.1,742.5 L947.2,749.9 L947.3,751.9 L947.5,745.4 L947.6,740.7 L947.7,752.8 L947.9,746.4 L948.0,744.2 L948.1,744.0 L948.3,739.3 L948.4,744.0 L948.5,741.5 L948.7,748.9 L948.8,742.2 L948.9,737.4 L949.1,746.5 L949.2,750.4 L949.3,742.7 L949.5,746.6 L949.6,743.0 L949.7,746.5 L949.9,743.7 L950.0,742.6 L950.1,751.6 L950.3,745.1 L950.4,744.7 L950.5,747.6 L950.7,747.8 L950.8,757.5 L950.9,745.6 L951.0,751.2 L951.2,744.8 L951.3,749.2 L951.4,744.3 L951.6,746.1 L951.7,750.0 L951.8,749.7 L952.0,742.5 L952.1,745.1 L952.2,751.5 L952.4,749.3 L952.5,754.1 L952.6,741.9 L952.8,744.3 L952.9,750.3 L953.0,746.2 L953.2,753.2 L953.3,743.8 L953.4,756.0 L953.6,756.2 L953.7,746.7 L953.8,752.9 L954.0,750.0 L954.1,743.1 L954.2,744.8 L954.4,747.6 L954.5,745.6 L954.6,742.8 L954.8,742.9 L954.9,747.9 L955.0,745.1 L955.2,741.5 L955.3,739.6 L955.4,744.3 L955.6,749.5 L955.7,746.7 L955.8,744.0 L956.0,751.8 L956.1,739.6 L956.2,742.1 L956.4,747.0 L956.5,738.8 L956.6,750.7 L956.8,743.5 L956.9,750.7 L957.0,747.4 L957.1,742.4 L957.3,739.0 L957.4,738.9 L957.5,738.3 L957.7,745.9 L957.8,744.6 L957.9,744.9 L958.1,742.0 L958.2,747.3 L958.3,759.3 L958.5,750.8 L958.6,749.6 L958.7,742.5 L958.9,751.1 L959.0,747.3 L959.1,738.9 L959.3,748.4 L959.4,745.6 L959.5,743.8 L959.7,737.8 L959.8,742.6 L959.9,747.6 L960.1,742.8 L960.2,738.2 L960.3,745.1 L960.5,746.1 L960.6,744.8 L960.7,756.1 L960.9,750.7 L961.0,744.1 L961.1,753.1 L961.3,753.6 L961.4,745.2 L961.5,757.3 L961.7,736.6 L961.8,743.3 L961.9,750.5 L962.1,741.8 L962.2,743.8 L962.3,740.1 L962.5,753.8 L962.6,750.5 L962.7,750.4 L962.9,739.2 L963.0,744.5 L963.1,745.5 L963.2,746.5 L963.4,745.2 L963.5,746.3 L963.6,737.8 L963.8,743.1 L963.9,746.3 L964.0,746.9 L964.2,747.2 L964.3,744.7 L964.4,741.5 L964.6,748.2 L964.7,746.4 L964.8,737.1 L965.0,751.8 L965.1,751.9 L965.2,742.5 L965.4,752.3 L965.5,744.3 L965.6,745.9 L965.8,741.3 L965.9,746.7 L966.0,737.2 L966.2,750.0 L966.3,742.4 L966.4,742.8 L966.6,747.5 L966.7,741.7 L966.8,751.2 L967.0,740.6 L967.1,746.8 L967.2,743.9 L967.4,751.4 L967.5,745.3 L967.6,748.2 L967.8,745.5 L967.9,752.9 L968.0,739.8 L968.2,747.7 L968.3,742.6 L968.4,751.9 L968.6,744.7 L968.7,745.5 L968.8,752.6 L969.0,755.2 L969.1,745.9 L969.2,751.3 L969.3,744.4 L969.5,751.4 L969.6,752.3 L969.7,743.4 L969.9,742.2 L970.0,741.6 L970.1,745.5 L970.3,752.5 L970.4,747.2 L970.5,754.0 L970.7,748.2 L970.8,749.1 L970.9,743.3 L971.1,752.8 L971.2,753.2 L971.3,754.8 L971.5,752.2 L971.6,748.7 L971.7,743.4 L971.9,743.9 L972.0,745.1 L972.1,742.6 L972.3,749.6 L972.4,748.3 L972.5,743.9 L972.7,742.5 L972.8,733.8 L972.9,743.2 L973.1,738.7 L973.2,747.1 L973.3,739.8 L973.5,738.5 L973.6,744.0 L973.7,743.7 L973.9,755.2 L974.0,753.0 L974.1,742.3 L974.3,746.2 L974.4,743.9 L974.5,746.8 L974.7,750.5 L974.8,744.0 L974.9,750.5 L975.1,746.9 L975.2,738.5 L975.3,749.7 L975.4,740.8 L975.6,744.4 L975.7,742.1 L975.8,747.0 L976.0,742.9 L976.1,749.4 L976.2,745.4 L976.4,749.8 L976.5,746.5 L976.6,743.6 L976.8,752.3 L976.9,748.4 L977.0,742.5 L977.2,754.6 L977.3,753.6 L977.4,757.7 L977.6,750.7 L977.7,749.4 L977.8,747.6 L978.0,748.5 L978.1,746.4 L978.2,752.0 L978.4,750.2 L978.5,749.9 L978.6,741.5 L978.8,747.6 L978.9,744.4 L979.0,744.3 L979.2,741.8 L979.3,752.3 L979.4,756.4 L979.6,753.4 L979.7,743.0 L979.8,745.6 L980.0,739.8 L980.1,741.6 L980.2,737.5 L980.4,749.0 L980.5,748.0 L980.6,744.2 L980.8,744.4 L980.9,746.3 L981.0,749.5 L981.1,738.7 L981.3,742.5 L981.4,736.9 L981.5,739.9 L981.7,740.6 L981.8,740.4 L981.9,747.4 L982.1,746.5 L982.2,745.1 L982.3,741.4 L982.5,745.1 L982.6,751.7 L982.7,743.5 L982.9,745.0 L983.0,747.3 L983.1,743.1 L983.3,747.5 L983.4,759.9 L983.5,753.5 L983.7,752.6 L983.8,750.7 L983.9,740.6 L984.1,741.6 L984.2,744.3 L984.3,744.2 L984.5,744.3 L984.6,743.3 L984.7,753.2 L984.9,746.8 L985.0,745.7 L985.1,743.7 L985.3,746.1 L985.4,745.0 L985.5,746.0 L985.7,750.6 L985.8,743.2 L985.9,747.7 L986.1,745.0 L986.2,747.0 L986.3,751.2 L986.5,748.6 L986.6,735.8 L986.7,747.7 L986.9,747.3 L987.0,750.8 L987.1,743.7 L987.2,745.0 L987.4,743.8 L987.5,749.0 L987.6,753.0 L987.8,746.9 L987.9,752.9 L988.0,751.8 L988.2,750.2 L988.3,751.0 L988.4,758.2 L988.6,746.6 L988.7,744.8 L988.8,757.9 L989.0,744.9 L989.1,750.2 L989.2,744.2 L989.4,747.1 L989.5,749.8 L989.6,739.2 L989.8,739.1 L989.9,740.7 L990.0,744.2 L990.2,751.3 L990.3,740.4 L990.4,747.7 L990.6,744.7 L990.7,750.7 L990.8,746.5 L991.0,756.8 L991.1,742.7 L991.2,750.5 L991.4,742.6 L991.5,753.0 L991.6,749.0 L991.8,749.5 L991.9,754.8 L992.0,746.3 L992.2,750.6 L992.3,754.3 L992.4,747.3 L992.6,751.6 L992.7,740.2 L992.8,738.3 L993.0,747.8 L993.1,744.4 L993.2,740.3 L993.3,750.8 L993.5,743.8 L993.6,747.2 L993.7,749.0 L993.9,744.7 L994.0,753.2 L994.1,751.7 L994.3,748.7 L994.4,748.7 L994.5,752.3 L994.7,749.9 L994.8,759.1 L994.9,744.8 L995.1,742.2 L995.2,744.1 L995.3,746.5 L995.5,745.2 L995.6,753.6 L995.7,746.7 L995.9,747.6 L996.0,742.6 L996.1,747.6 L996.3,743.7 L996.4,754.8 L996.5,746.2 L996.7,748.9 L996.8,750.3 L996.9,748.1 L997.1,747.0 L997.2,747.4 L997.3,751.4 L997.5,743.9 L997.6,744.1 L997.7,745.0 L997.9,746.6 L998.0,744.3 L998.1,751.0 L998.3,747.6 L998.4,747.3 L998.5,743.4 L998.7,743.3 L998.8,743.5 L998.9,746.8 L999.1,741.4 L999.2,757.9 L999.3,753.5 L999.4,756.6 L999.6,757.4 L999.7,750.4 L999.8,758.8 L1000.0,751.4 L1000.1,748.4 L1000.2,745.5 L1000.4,745.6 L1000.5,747.3 L1000.6,753.5 L1000.8,755.0 L1000.9,751.6 L1001.0,749.4 L1001.2,740.1 L1001.3,751.8 L1001.4,744.9 L1001.6,745.4 L1001.7,744.1 L1001.8,745.8 L1002.0,743.9 L1002.1,753.7 L1002.2,751.8 L1002.4,743.9 L1002.5,759.0 L1002.6,753.9 L1002.8,751.3 L1002.9,747.3 L1003.0,746.5 L1003.2,751.8 L1003.3,747.8 L1003.4,748.8 L1003.6,747.2 L1003.7,747.5 L1003.8,753.2 L1004.0,754.4 L1004.1,737.0 L1004.2,747.0 L1004.4,743.0 L1004.5,754.0 L1004.6,741.0 L1004.8,743.0 L1004.9,752.0 L1005.0,747.1 L1005.2,753.2 L1005.3,733.5 L1005.4,752.7 L1005.5,755.7 L1005.7,747.0 L1005.8,747.2 L1005.9,738.1 L1006.1,750.3 L1006.2,741.4 L1006.3,752.7 L1006.5,750.2 L1006.6,746.8 L1006.7,743.1 L1006.9,753.4 L1007.0,744.1 L1007.1,750.7 L1007.3,749.2 L1007.4,751.7 L1007.5,748.7 L1007.7,756.2 L1007.8,743.4 L1007.9,745.4 L1008.1,751.8 L1008.2,753.3 L1008.3,754.5 L1008.5,743.0 L1008.6,753.4 L1008.7,754.1 L1008.9,748.8 L1009.0,751.6 L1009.1,754.0 L1009.3,749.5 L1009.4,748.4 L1009.5,739.3 L1009.7,753.4 L1009.8,743.4 L1009.9,745.7 L1010.1,749.6 L1010.2,752.0 L1010.3,753.6 L1010.5,745.3 L1010.6,756.4 L1010.7,740.9 L1010.9,753.0 L1011.0,751.5 L1011.1,745.2 L1011.2,742.6 L1011.4,741.7 L1011.5,746.5 L1011.6,750.9 L1011.8,741.3 L1011.9,744.1 L1012.0,745.3 L1012.2,746.6 L1012.3,747.9 L1012.4,745.7 L1012.6,739.5 L1012.7,747.7 L1012.8,750.2 L1013.0,753.1 L1013.1,757.2 L1013.2,742.3 L1013.4,749.5 L1013.5,753.5 L1013.6,750.0 L1013.8,747.6 L1013.9,750.6 L1014.0,753.0 L1014.2,748.1 L1014.3,741.2 L1014.4,747.0 L1014.6,741.2 L1014.7,751.6 L1014.8,742.0 L1015.0,738.9 L1015.1,745.9 L1015.2,774.7 L1015.4,752.2 L1015.5,753.1 L1015.6,747.3 L1015.8,738.0 L1015.9,742.1 L1016.0,748.5 L1016.2,748.9 L1016.3,750.6 L1016.4,747.3 L1016.6,749.8 L1016.7,747.5 L1016.8,750.0 L1017.0,748.5 L1017.1,757.3 L1017.2,753.2 L1017.3,745.9 L1017.5,748.0 L1017.6,750.1 L1017.7,744.8 L1017.9,743.2 L1018.0,750.1 L1018.1,739.9 L1018.3,745.4 L1018.4,752.7 L1018.5,754.1 L1018.7,748.4 L1018.8,735.6 L1018.9,745.2 L1019.1,743.7 L1019.2,747.0 L1019.3,753.5 L1019.5,751.7 L1019.6,750.8 L1019.7,749.2 L1019.9,743.6 L1020.0,743.9 L1020.1,761.2 L1020.3,753.4 L1020.4,748.0 L1020.5,753.6 L1020.7,746.2 L1020.8,751.7 L1020.9,741.4 L1021.1,746.4 L1021.2,747.8 L1021.3,749.1 L1021.5,746.5 L1021.6,737.1 L1021.7,749.5 L1021.9,742.8 L1022.0,735.8 L1022.1,740.8 L1022.3,736.3 L1022.4,747.1 L1022.5,734.2 L1022.7,749.9 L1022.8,735.1 L1022.9,741.2 L1023.1,746.6 L1023.2,738.6 L1023.3,741.7 L1023.4,739.2 L1023.6,741.9 L1023.7,745.8 L1023.8,748.2 L1024.0,750.5 L1024.1,755.4 L1024.2,752.5 L1024.4,739.4 L1024.5,743.7 L1024.6,739.0 L1024.8,751.5 L1024.9,751.7 L1025.0,736.1 L1025.2,751.9 L1025.3,741.0 L1025.4,740.0 L1025.6,742.9 L1025.7,753.2 L1025.8,742.9 L1026.0,745.9 L1026.1,747.5 L1026.2,747.1 L1026.4,746.7 L1026.5,750.5 L1026.6,745.8 L1026.8,755.1 L1026.9,747.6 L1027.0,752.2 L1027.2,741.3 L1027.3,749.8 L1027.4,743.2 L1027.6,748.7 L1027.7,744.9 L1027.8,739.8 L1028.0,750.7 L1028.1,743.9 L1028.2,745.5 L1028.4,749.1 L1028.5,746.2 L1028.6,751.1 L1028.8,751.6 L1028.9,742.3 L1029.0,745.4 L1029.2,745.5 L1029.3,746.7 L1029.4,751.7 L1029.5,743.8 L1029.7,749.2 L1029.8,745.8 L1029.9,751.9 L1030.1,744.8 L1030.2,747.5 L1030.3,737.9 L1030.5,732.5 L1030.6,743.7 L1030.7,745.4 L1030.9,738.5 L1031.0,748.4 L1031.1,747.8 L1031.3,749.8 L1031.4,748.3 L1031.5,748.4 L1031.7,744.1 L1031.8,739.9 L1031.9,744.1 L1032.1,739.8 L1032.2,749.4 L1032.3,742.4 L1032.5,745.2 L1032.6,747.1 L1032.7,744.2 L1032.9,735.1 L1033.0,747.2 L1033.1,733.7 L1033.3,728.4 L1033.4,743.3 L1033.5,753.9 L1033.7,745.6 L1033.8,738.5 L1033.9,746.8 L1034.1,749.7 L1034.2,752.1 L1034.3,742.9 L1034.5,752.3 L1034.6,748.6 L1034.7,739.8 L1034.9,749.9 L1035.0,749.6 L1035.1,751.7 L1035.3,751.6 L1035.4,743.1 L1035.5,743.8 L1035.6,741.5 L1035.8,741.6 L1035.9,750.7 L1036.0,757.2 L1036.2,757.4 L1036.3,745.6 L1036.4,745.1 L1036.6,748.6 L1036.7,746.1 L1036.8,751.0 L1037.0,743.2 L1037.1,739.5 L1037.2,746.3 L1037.4,753.1 L1037.5,752.0 L1037.6,750.6 L1037.8,767.5 L1037.9,745.1 L1038.0,741.6 L1038.2,750.3 L1038.3,747.1 L1038.4,746.3 L1038.6,741.5 L1038.7,744.3 L1038.8,752.3 L1039.0,743.0 L1039.1,748.9 L1039.2,743.6 L1039.4,747.5 L1039.5,756.4 L1039.6,747.9 L1039.8,755.2 L1039.9,749.2 L1040.0,742.7 L1040.2,746.2 L1040.3,747.5 L1040.4,756.0 L1040.6,740.9 L1040.7,747.1 L1040.8,753.6 L1041.0,746.3 L1041.1,746.8 L1041.2,743.5 L1041.4,749.2 L1041.5,747.1 L1041.6,743.6 L1041.7,747.3 L1041.9,743.0 L1042.0,753.4 L1042.1,748.4 L1042.3,753.0 L1042.4,747.6 L1042.5,742.2 L1042.7,742.3 L1042.8,742.0 L1042.9,741.7 L1043.1,745.9 L1043.2,748.9 L1043.3,744.4 L1043.5,744.9 L1043.6,748.6 L1043.7,743.0 L1043.9,750.9 L1044.0,749.9 L1044.1,745.4 L1044.3,746.9 L1044.4,750.5 L1044.5,739.6 L1044.7,754.6 L1044.8,750.0 L1044.9,749.8 L1045.1,754.5 L1045.2,750.4 L1045.3,749.6 L1045.5,747.1 L1045.6,739.2 L1045.7,743.9 L1045.9,741.1 L1046.0,748.9 L1046.1,753.8 L1046.3,747.0 L1046.4,746.6 L1046.5,744.7 L1046.7,744.8 L1046.8,742.5 L1046.9,749.4 L1047.1,748.7 L1047.2,748.3 L1047.3,741.4 L1047.4,754.0 L1047.6,746.3 L1047.7,747.9 L1047.8,745.5 L1048.0,752.2 L1048.1,743.5 L1048.2,752.3 L1048.4,748.0 L1048.5,750.6 L1048.6,746.3 L1048.8,745.5 L1048.9,741.0 L1049.0,740.8 L1049.2,745.7 L1049.3,748.2 L1049.4,746.2 L1049.6,748.5 L1049.7,749.3 L1049.8,747.3 L1050.0,740.1 L1050.1,741.6 L1050.2,740.4 L1050.4,751.4 L1050.5,742.2 L1050.6,741.6 L1050.8,744.5 L1050.9,743.8 L1051.0,749.5 L1051.2,747.8 L1051.3,757.3 L1051.4,750.2 L1051.6,741.7 L1051.7,750.2 L1051.8,744.8 L1052.0,748.4 L1052.1,758.0 L1052.2,751.0 L1052.4,741.7 L1052.5,740.1 L1052.6,738.2 L1052.8,747.2 L1052.9,749.0 L1053.0,749.9 L1053.2,752.1 L1053.3,741.1 L1053.4,749.7 L1053.5,749.2 L1053.7,751.4 L1053.8,747.6 L1053.9,746.4 L1054.1,751.3 L1054.2,742.0 L1054.3,739.5 L1054.5,749.6 L1054.6,745.0 L1054.7,742.9 L1054.9,736.0 L1055.0,745.9 L1055.1,754.1 L1055.3,748.0 L1055.4,756.2 L1055.5,746.9 L1055.7,743.8 L1055.8,738.4 L1055.9,743.4 L1056.1,747.9 L1056.2,744.9 L1056.3,747.6 L1056.5,747.0 L1056.6,750.1 L1056.7,744.6 L1056.9,745.0 L1057.0,741.6 L1057.1,742.1 L1057.3,745.0 L1057.4,757.3 L1057.5,745.8 L1057.7,743.6 L1057.8,743.4 L1057.9,742.7 L1058.1,740.1 L1058.2,751.1 L1058.3,746.4 L1058.5,749.4 L1058.6,743.8 L1058.7,752.3 L1058.9,742.8 L1059.0,750.3 L1059.1,746.9 L1059.3,748.3 L1059.4,748.5 L1059.5,757.4 L1059.6,750.1 L1059.8,757.0 L1059.9,750.5 L1060.0,752.6 L1060.2,746.8 L1060.3,752.6 L1060.4,750.5 L1060.6,747.9 L1060.7,748.2 L1060.8,749.3 L1061.0,754.7 L1061.1,748.5 L1061.2,753.2 L1061.4,746.3 L1061.5,749.5 L1061.6,749.3 L1061.8,741.1 L1061.9,749.2 L1062.0,748.2 L1062.2,746.8 L1062.3,752.8 L1062.4,746.7 L1062.6,750.3 L1062.7,742.2 L1062.8,744.6 L1063.0,753.3 L1063.1,747.9 L1063.2,751.8 L1063.4,746.3 L1063.5,744.3 L1063.6,742.6 L1063.8,744.5 L1063.9,739.3 L1064.0,740.3 L1064.2,735.3 L1064.3,742.4 L1064.4,747.6 L1064.6,747.9 L1064.7,749.0 L1064.8,738.0 L1065.0,745.2 L1065.1,739.5 L1065.2,741.4 L1065.4,732.0 L1065.5,742.9 L1065.6,740.6 L1065.7,744.7 L1065.9,730.0 L1066.0,739.2 L1066.1,744.0 L1066.3,746.4 L1066.4,743.7 L1066.5,737.7 L1066.7,753.9 L1066.8,749.7 L1066.9,745.7 L1067.1,748.6 L1067.2,743.0 L1067.3,750.9 L1067.5,743.8 L1067.6,747.9 L1067.7,750.2 L1067.9,745.7 L1068.0,746.4 L1068.1,747.6 L1068.3,751.6 L1068.4,745.5 L1068.5,745.0 L1068.7,746.1 L1068.8,749.7 L1068.9,754.9 L1069.1,745.8 L1069.2,748.2 L1069.3,753.7 L1069.5,750.5 L1069.6,752.4 L1069.7,754.1 L1069.9,751.3 L1070.0,745.5 L1070.1,746.1 L1070.3,753.1 L1070.4,749.7 L1070.5,750.9 L1070.7,749.8 L1070.8,752.9 L1070.9,745.3 L1071.1,746.9 L1071.2,750.4 L1071.3,747.5 L1071.5,743.2 L1071.6,740.9 L1071.7,745.6 L1071.8,739.4 L1072.0,743.2 L1072.1,740.1 L1072.2,740.3 L1072.4,745.5 L1072.5,751.7 L1072.6,752.3 L1072.8,748.3 L1072.9,750.4 L1073.0,738.4 L1073.2,745.1 L1073.3,756.1 L1073.4,749.7 L1073.6,755.2 L1073.7,745.1 L1073.8,753.2 L1074.0,753.0 L1074.1,753.3 L1074.2,752.1 L1074.4,746.1 L1074.5,750.0 L1074.6,749.9 L1074.8,750.6 L1074.9,742.2 L1075.0,751.8 L1075.2,688.3 L1075.3,753.9 L1075.4,742.7 L1075.6,744.6 L1075.7,745.3 L1075.8,753.8 L1076.0,747.7 L1076.1,756.5 L1076.2,746.0 L1076.4,742.2 L1076.5,749.6 L1076.6,749.4 L1076.8,756.7 L1076.9,748.4 L1077.0,743.0 L1077.2,756.5 L1077.3,742.1 L1077.4,749.5 L1077.5,748.3 L1077.7,743.6 L1077.8,735.8 L1077.9,753.6 L1078.1,741.1 L1078.2,740.1 L1078.3,743.6 L1078.5,739.6 L1078.6,739.9 L1078.7,729.7 L1078.9,750.1 L1079.0,740.2 L1079.1,740.8 L1079.3,744.1 L1079.4,749.7 L1079.5,746.0 L1079.7,739.3 L1079.8,750.2 L1079.9,748.1 L1080.1,741.6 L1080.2,742.9 L1080.3,746.8 L1080.5,745.7 L1080.6,744.6 L1080.7,743.9 L1080.9,746.4 L1081.0,749.9 L1081.1,747.4 L1081.3,746.8 L1081.4,747.5 L1081.5,747.1 L1081.7,754.1 L1081.8,753.3 L1081.9,750.4 L1082.1,755.1 L1082.2,745.5 L1082.3,746.6 L1082.5,754.8 L1082.6,743.6 L1082.7,752.1 L1082.9,772.6 L1083.0,733.5 L1083.1,749.8 L1083.3,745.6 L1083.4,746.5 L1083.5,744.8 L1083.6,749.5 L1083.8,749.0 L1083.9,745.6 L1084.0,749.9 L1084.2,746.5 L1084.3,745.5 L1084.4,744.5 L1084.6,744.2 L1084.7,747.4 L1084.8,748.7 L1085.0,750.0 L1085.1,745.7 L1085.2,747.6 L1085.4,743.3 L1085.5,745.4 L1085.6,740.3 L1085.8,746.5 L1085.9,750.3 L1086.0,744.0 L1086.2,747.5 L1086.3,747.3 L1086.4,744.0 L1086.6,750.7 L1086.7,746.1 L1086.8,747.8 L1087.0,746.3 L1087.1,747.5 L1087.2,749.0 L1087.4,746.9 L1087.5,749.2 L1087.6,743.8 L1087.8,747.1 L1087.9,748.4 L1088.0,746.0 L1088.2,740.8 L1088.3,735.0 L1088.4,749.1 L1088.6,744.2 L1088.7,749.6 L1088.8,751.7 L1089.0,745.0 L1089.1,742.5 L1089.2,742.1 L1089.4,747.4 L1089.5,742.4 L1089.6,747.3 L1089.7,745.6 L1089.9,740.8 L1090.0,745.5 L1090.1,744.0 L1090.3,749.4 L1090.4,749.1 L1090.5,749.1 L1090.7,756.7 L1090.8,745.9 L1090.9,754.8 L1091.1,751.9 L1091.2,744.2 L1091.3,749.8 L1091.5,746.6 L1091.6,753.1 L1091.7,742.1 L1091.9,745.2 L1092.0,739.7 L1092.1,738.9 L1092.3,740.3 L1092.4,740.6 L1092.5,741.3 L1092.7,740.5 L1092.8,744.0 L1092.9,740.8 L1093.1,745.4 L1093.2,745.8 L1093.3,743.3 L1093.5,752.5 L1093.6,752.7 L1093.7,748.1 L1093.9,741.2 L1094.0,745.0 L1094.1,740.9 L1094.3,746.0 L1094.4,746.8 L1094.5,750.3 L1094.7,745.6 L1094.8,747.0 L1094.9,744.0 L1095.1,746.1 L1095.2,747.9 L1095.3,748.2 L1095.5,742.0 L1095.6,743.2 L1095.7,748.2 L1095.8,745.3 L1096.0,742.5 L1096.1,742.0 L1096.2,747.4 L1096.4,744.1 L1096.5,751.9 L1096.6,746.3 L1096.8,755.0 L1096.9,754.4 L1097.0,755.2 L1097.2,758.9 L1097.3,750.4 L1097.4,749.4 L1097.6,754.5 L1097.7,744.3 L1097.8,750.9 L1098.0,744.5 L1098.1,739.0 L1098.2,739.2 L1098.4,748.3 L1098.5,744.4 L1098.6,748.8 L1098.8,744.1 L1098.9,742.0 L1099.0,738.7 L1099.2,738.9 L1099.3,739.0 L1099.4,744.5 L1099.6,741.2 L1099.7,748.9 L1099.8,732.9 L1100.0,757.1 L1100.1,749.9 L1100.2,755.8 L1100.4,742.1 L1100.5,749.1 L1100.6,743.6 L1100.8,749.8 L1100.9,742.5 L1101.0,736.7 L1101.2,744.7 L1101.3,747.7 L1101.4,737.0 L1101.6,746.6 L1101.7,743.4 L1101.8,746.1 L1101.9,739.6 L1102.1,743.0 L1102.2,750.5 L1102.3,746.7 L1102.5,754.5 L1102.6,749.7 L1102.7,746.4 L1102.9,745.3 L1103.0,750.3 L1103.1,748.3 L1103.3,748.2 L1103.4,745.4 L1103.5,732.5 L1103.7,748.1 L1103.8,750.9 L1103.9,751.9 L1104.1,741.9 L1104.2,742.2 L1104.3,748.2 L1104.5,737.2 L1104.6,748.0 L1104.7,749.4 L1104.9,754.5 L1105.0,746.5 L1105.1,746.1 L1105.3,751.5 L1105.4,748.1 L1105.5,743.1 L1105.7,745.7 L1105.8,742.6 L1105.9,744.7 L1106.1,745.1 L1106.2,749.9 L1106.3,741.1 L1106.5,749.2 L1106.6,733.7 L1106.7,743.8 L1106.9,736.5 L1107.0,739.4 L1107.1,747.2 L1107.3,734.7 L1107.4,735.4 L1107.5,737.3 L1107.7,735.7 L1107.8,739.4 L1107.9,755.2 L1108.0,738.1 L1108.2,743.8 L1108.3,740.4 L1108.4,736.9 L1108.6,738.0 L1108.7,744.5 L1108.8,744.2 L1109.0,744.4 L1109.1,741.9 L1109.2,738.4 L1109.4,742.1 L1109.5,748.1 L1109.6,743.1 L1109.8,740.5 L1109.9,750.7 L1110.0,746.0 L1110.2,736.5 L1110.3,743.9 L1110.4,741.0 L1110.6,750.8 L1110.7,746.2 L1110.8,755.4 L1111.0,749.1 L1111.1,742.9 L1111.2,750.5 L1111.4,746.0 L1111.5,750.0 L1111.6,748.4 L1111.8,747.2 L1111.9,746.2 L1112.0,746.2 L1112.2,751.5 L1112.3,745.1 L1112.4,740.1 L1112.6,737.2 L1112.7,743.1 L1112.8,748.2 L1113.0,743.1 L1113.1,752.7 L1113.2,740.5 L1113.4,749.6 L1113.5,753.7 L1113.6,751.1 L1113.7,749.8 L1113.9,747.7 L1114.0,747.6 L1114.1,755.6 L1114.3,749.3 L1114.4,739.9 L1114.5,744.6 L1114.7,750.1 L1114.8,745.5 L1114.9,747.4 L1115.1,742.9 L1115.2,751.0 L1115.3,749.5 L1115.5,744.1 L1115.6,740.2 L1115.7,741.6 L1115.9,745.2 L1116.0,753.9 L1116.1,747.7 L1116.3,739.0 L1116.4,736.2 L1116.5,749.2 L1116.7,757.8 L1116.8,754.0 L1116.9,751.1 L1117.1,751.2 L1117.2,750.3 L1117.3,748.3 L1117.5,738.4 L1117.6,757.4 L1117.7,745.0 L1117.9,745.4 L1118.0,748.0 L1118.1,745.8 L1118.3,751.4 L1118.4,754.1 L1118.5,743.1 L1118.7,744.1 L1118.8,747.0 L1118.9,744.5 L1119.1,747.2 L1119.2,750.8 L1119.3,753.2 L1119.5,756.1 L1119.6,752.8 L1119.7,746.4 L1119.8,746.2 L1120.0,749.7 L1120.1,749.2 L1120.2,744.9 L1120.4,748.5 L1120.5,758.3 L1120.6,754.4 L1120.8,747.8 L1120.9,739.0 L1121.0,740.4 L1121.2,733.4 L1121.3,746.1 L1121.4,743.5 L1121.6,746.9 L1121.7,749.7 L1121.8,748.8 L1122.0,745.3 L1122.1,744.1 L1122.2,750.0 L1122.4,748.3 L1122.5,745.2 L1122.6,746.4 L1122.8,745.6 L1122.9,722.2 L1123.0,773.7 L1123.2,754.3 L1123.3,735.0 L1123.4,750.5 L1123.6,749.5 L1123.7,746.7 L1123.8,750.7 L1124.0,749.6 L1124.1,746.1 L1124.2,749.0 L1124.4,755.7 L1124.5,752.0 L1124.6,750.4 L1124.8,744.1 L1124.9,751.2 L1125.0,740.6 L1125.2,754.9 L1125.3,758.1 L1125.4,751.1 L1125.6,754.5 L1125.7,749.8 L1125.8,737.9 L1125.9,742.3 L1126.1,751.5 L1126.2,750.1 L1126.3,749.7 L1126.5,746.9 L1126.6,740.8 L1126.7,753.8 L1126.9,748.5 L1127.0,753.5 L1127.1,755.5 L1127.3,751.8 L1127.4,753.1 L1127.5,738.1 L1127.7,752.4 L1127.8,749.3 L1127.9,750.1 L1128.1,753.3 L1128.2,757.2 L1128.3,752.1 L1128.5,756.2 L1128.6,749.7 L1128.7,746.7 L1128.9,742.8 L1129.0,748.9 L1129.1,739.5 L1129.3,747.6 L1129.4,749.3 L1129.5,750.5 L1129.7,756.7 L1129.8,744.2 L1129.9,742.5 L1130.1,749.2 L1130.2,743.7 L1130.3,752.8 L1130.5,747.3 L1130.6,754.5 L1130.7,748.7 L1130.9,749.6 L1131.0,749.7 L1131.1,746.9 L1131.3,753.2 L1131.4,755.6 L1131.5,757.5 L1131.7,754.1 L1131.8,749.0 L1131.9,756.1 L1132.0,748.5 L1132.2,749.4 L1132.3,746.8 L1132.4,740.6 L1132.6,748.9 L1132.7,750.9 L1132.8,745.6 L1133.0,750.2 L1133.1,745.7 L1133.2,745.1 L1133.4,740.9 L1133.5,738.9 L1133.6,737.4 L1133.8,751.4 L1133.9,757.0 L1134.0,746.0 L1134.2,751.6 L1134.3,755.9 L1134.4,755.0 L1134.6,748.2 L1134.7,747.9 L1134.8,742.8 L1135.0,749.1 L1135.1,748.8 L1135.2,742.5 L1135.4,742.5 L1135.5,746.1 L1135.6,749.4 L1135.8,748.7 L1135.9,747.7 L1136.0,750.8 L1136.2,749.0 L1136.3,742.3 L1136.4,745.5 L1136.6,739.7 L1136.7,740.9 L1136.8,747.5 L1137.0,741.3 L1137.1,752.1 L1137.2,733.5 L1137.4,766.5 L1137.5,743.6 L1137.6,752.0 L1137.8,744.3 L1137.9,749.3 L1138.0,750.8 L1138.1,739.1 L1138.3,741.6 L1138.4,753.4 L1138.5,748.8 L1138.7,741.8 L1138.8,749.7 L1138.9,750.0 L1139.1,745.2 L1139.2,751.7 L1139.3,753.6 L1139.5,743.3 L1139.6,749.2 L1139.7,752.6 L1139.9,743.5 L1140.0,753.2 L1140.1,742.6 L1140.3,748.6 L1140.4,744.7 L1140.5,752.0 L1140.7,745.0 L1140.8,744.8 L1140.9,741.4 L1141.1,742.7 L1141.2,750.2 L1141.3,737.8 L1141.5,736.8 L1141.6,742.0 L1141.7,735.9 L1141.9,742.7 L1142.0,741.0 L1142.1,745.6 L1142.3,751.5 L1142.4,749.3 L1142.5,746.6 L1142.7,746.6 L1142.8,746.9 L1142.9,748.7 L1143.1,749.9 L1143.2,746.6 L1143.3,744.8 L1143.5,745.6 L1143.6,751.5 L1143.7,747.2 L1143.8,741.2 L1144.0,748.7 L1144.1,747.1 L1144.2,750.8 L1144.4,746.1 L1144.5,748.9 L1144.6,749.3 L1144.8,751.2 L1144.9,746.0 L1145.0,741.9 L1145.2,740.0 L1145.3,740.7 L1145.4,736.0 L1145.6,740.7 L1145.7,739.9 L1145.8,747.6 L1146.0,740.4 L1146.1,748.8 L1146.2,743.4 L1146.4,741.8 L1146.5,750.4 L1146.6,735.8 L1146.8,737.0 L1146.9,747.5 L1147.0,748.6 L1147.2,742.5 L1147.3,745.6 L1147.4,747.1 L1147.6,745.5 L1147.7,749.2 L1147.8,742.8 L1148.0,746.1 L1148.1,746.7 L1148.2,738.9 L1148.4,745.2 L1148.5,747.8 L1148.6,743.6 L1148.8,748.7 L1148.9,741.7 L1149.0,747.5 L1149.2,738.1 L1149.3,745.0 L1149.4,748.3 L1149.6,754.3 L1149.7,748.4 L1149.8,746.2 L1149.9,747.9 L1150.1,745.7 L1150.2,749.0 L1150.3,755.3 L1150.5,752.8 L1150.6,736.9 L1150.7,738.7 L1150.9,744.6 L1151.0,746.3 L1151.1,741.8 L1151.3,750.1 L1151.4,741.8 L1151.5,744.3 L1151.7,740.8 L1151.8,748.5 L1151.9,749.3 L1152.1,748.1 L1152.2,745.3 L1152.3,740.7 L1152.5,749.8 L1152.6,751.2 L1152.7,750.2 L1152.9,741.2 L1153.0,744.2 L1153.1,744.2 L1153.3,743.3 L1153.4,743.8 L1153.5,747.8 L1153.7,748.9 L1153.8,745.6 L1153.9,688.3 L1154.1,747.7 L1154.2,741.4 L1154.3,747.0 L1154.5,742.1 L1154.6,745.7 L1154.7,746.0 L1154.9,749.2 L1155.0,735.6 L1155.1,734.9 L1155.3,746.6 L1155.4,745.1 L1155.5,743.5 L1155.7,739.9 L1155.8,748.6 L1155.9,746.7 L1156.0,738.1 L1156.2,744.5 L1156.3,740.0 L1156.4,746.8 L1156.6,755.0 L1156.7,750.8 L1156.8,755.6 L1157.0,751.7 L1157.1,753.8 L1157.2,744.5 L1157.4,746.2 L1157.5,749.7 L1157.6,747.9 L1157.8,748.9 L1157.9,751.2 L1158.0,752.0 L1158.2,734.1 L1158.3,755.3 L1158.4,747.3 L1158.6,760.3 L1158.7,746.9 L1158.8,744.6 L1159.0,753.4 L1159.1,757.8 L1159.2,747.0 L1159.4,749.0 L1159.5,754.0 L1159.6,756.5 L1159.8,763.3 L1159.9,753.0 L1160.0,750.3 L1160.2,754.5 L1160.3,752.0 L1160.4,755.8 L1160.6,747.2 L1160.7,746.7 L1160.8,747.9 L1161.0,749.1 L1161.1,746.4 L1161.2,748.4 L1161.4,746.6 L1161.5,742.5 L1161.6,743.2 L1161.8,743.9 L1161.9,745.7 L1162.0,751.7 L1162.1,752.1 L1162.3,754.3 L1162.4,744.1 L1162.5,752.2 L1162.7,740.0 L1162.8,747.4 L1162.9,745.5 L1163.1,753.0 L1163.2,750.5 L1163.3,753.9 L1163.5,755.8 L1163.6,751.1 L1163.7,751.7 L1163.9,745.2 L1164.0,749.7 L1164.1,750.7 L1164.3,751.2 L1164.4,746.2 L1164.5,749.9 L1164.7,759.4 L1164.8,741.4 L1164.9,747.5 L1165.1,753.9 L1165.2,737.9 L1165.3,750.4 L1165.5,752.7 L1165.6,749.8 L1165.7,744.3 L1165.9,719.1 L1166.0,752.7 L1166.1,753.3 L1166.3,748.1 L1166.4,751.8 L1166.5,739.8 L1166.7,745.9 L1166.8,749.6 L1166.9,747.4 L1167.1,753.3 L1167.2,751.3 L1167.3,751.0 L1167.5,737.7 L1167.6,743.1 L1167.7,747.4 L1167.9,742.9 L1168.0,755.4 L1168.1,750.2 L1168.2,748.6 L1168.4,749.7 L1168.5,747.4 L1168.6,755.2 L1168.8,747.0 L1168.9,748.2 L1169.0,753.7 L1169.2,759.7 L1169.3,759.1 L1169.4,754.5 L1169.6,753.6 L1169.7,755.8 L1169.8,749.9 L1170.0,753.2 L1170.1,749.2 L1170.2,744.9 L1170.4,753.4 L1170.5,755.1 L1170.6,749.9 L1170.8,753.9 L1170.9,756.3 L1171.0,754.8 L1171.2,747.3 L1171.3,743.9 L1171.4,753.8 L1171.6,752.4 L1171.7,758.8 L1171.8,752.9 L1172.0,756.5 L1172.1,759.5 L1172.2,756.4 L1172.4,759.5 L1172.5,750.2 L1172.6,751.5 L1172.8,755.3 L1172.9,746.8 L1173.0,747.5 L1173.2,759.4 L1173.3,750.9 L1173.4,746.3 L1173.6,744.8 L1173.7,749.3 L1173.8,754.0 L1174.0,755.3 L1174.1,755.0 L1174.2,743.8 L1174.3,751.4 L1174.5,750.5 L1174.6,746.1 L1174.7,748.2 L1174.9,757.9 L1175.0,752.7 L1175.1,750.1 L1175.3,747.7 L1175.4,748.2 L1175.5,745.7 L1175.7,744.0 L1175.8,747.7 L1175.9,745.3 L1176.1,749.7 L1176.2,747.0 L1176.3,746.1 L1176.5,748.9 L1176.6,748.4 L1176.7,751.9 L1176.9,756.4 L1177.0,748.0 L1177.1,747.9 L1177.3,751.2 L1177.4,746.1 L1177.5,750.8 L1177.7,751.2 L1177.8,748.2 L1177.9,743.7 L1178.1,747.6 L1178.2,747.7 L1178.3,751.2 L1178.5,753.3 L1178.6,752.5 L1178.7,755.5 L1178.9,750.4 L1179.0,766.0 L1179.1,749.6 L1179.3,764.6 L1179.4,754.0 L1179.5,753.1 L1179.7,744.7 L1179.8,754.2 L1179.9,745.3 L1180.0,748.6 L1180.2,750.7 L1180.3,746.2 L1180.4,758.3 L1180.6,754.8 L1180.7,756.8 L1180.8,761.9 L1181.0,757.5 L1181.1,751.5 L1181.2,759.7 L1181.4,751.7 L1181.5,753.6 L1181.6,754.7 L1181.8,750.6 L1181.9,745.8 L1182.0,740.9 L1182.2,754.3 L1182.3,751.8 L1182.4,758.7 L1182.6,761.7 L1182.7,753.4 L1182.8,757.2 L1183.0,750.6 L1183.1,731.4 L1183.2,808.4" fill="none" stroke="#0000ff" stroke-width="1.7" stroke-linejoin="miter"/>
<rect x="1108.8" y="519.8" width="73.20000000000005" height="15.800000000000068" rx="2" ry="2" fill="#ffffff" fill-opacity="0.8" stroke="#cccccc" stroke-width="1"/><line x1="1111.6" y1="527.9" x2="1133.6" y2="527.9" stroke="#0000ff" stroke-width="1.4"/>
<rect x="1108.8" y="692.0" width="73.20000000000005" height="15.799999999999955" rx="2" ry="2" fill="#ffffff" fill-opacity="0.8" stroke="#cccccc" stroke-width="1"/><line x1="1111.6" y1="700.1" x2="1133.6" y2="700.1" stroke="#0000ff" stroke-width="1.4"/>
<rect x="105.9" y="175.4" width="570.4" height="570.6" fill="none" stroke="#262626" stroke-width="1.75"/>
<rect x="712.1" y="112.9" width="35.0" height="695.8" fill="none" stroke="#262626" stroke-width="1.75"/>
<rect x="910.8" y="112.6" width="274.4" height="120.3" fill="none" stroke="#262626" stroke-width="1.75"/>
<rect x="911.0" y="284.6" width="274.0" height="120.0" fill="none" stroke="#262626" stroke-width="1.75"/>
<rect x="911.3" y="516.6" width="273.5" height="119.6" fill="none" stroke="#262626" stroke-width="1.75"/>
<rect x="911.3" y="688.8" width="273.5" height="119.8" fill="none" stroke="#262626" stroke-width="1.75"/>
<text x="5.56" y="22.90" font-size="16.3" textLength="164.58" lengthAdjust="spacingAndGlyphs">2023-12-11: HAWKI</text>
<text x="335.45" y="22.80" font-size="12.2" textLength="56.51" lengthAdjust="spacingAndGlyphs">type info</text>
<text x="628.75" y="22.60" font-size="12.2" textLength="67.31" lengthAdjust="spacingAndGlyphs">set-up info</text>
<text x="6.56" y="44.80" font-size="12.0" textLength="60.98" lengthAdjust="spacingAndGlyphs">ORIGFILE:</text>
<text x="5.56" y="61.60" font-size="12.0" textLength="55.08" lengthAdjust="spacingAndGlyphs">ARCFILE:</text>
<text x="5.86" y="79.70" font-size="12.0" textLength="60.38" lengthAdjust="spacingAndGlyphs">raw_type:</text>
<text x="6.96" y="97.80" font-size="12.0" textLength="55.98" lengthAdjust="spacingAndGlyphs">do_class:</text>
<text x="6.96" y="113.30" font-size="12.0" textLength="64.18" lengthAdjust="spacingAndGlyphs">extension:</text>
<text x="74.66" y="44.80" font-size="12.0" textLength="245.38" lengthAdjust="spacingAndGlyphs">HAWKI_IMG_DARK_DetLin345_0003.fits</text>
<text x="74.66" y="61.60" font-size="12.0" textLength="232.08" lengthAdjust="spacingAndGlyphs">HAWKI.2023-12-11T21:15:14.606.fits</text>
<text x="74.96" y="79.90" font-size="12.0" textLength="44.08" lengthAdjust="spacingAndGlyphs">DETLIN</text>
<text x="74.96" y="97.80" font-size="12.0" textLength="60.48" lengthAdjust="spacingAndGlyphs">OFF_RAW</text>
<text x="74.46" y="113.30" font-size="12.0" textLength="8.58" lengthAdjust="spacingAndGlyphs">4</text>
<text x="335.86" y="44.80" font-size="12.0" textLength="67.78" lengthAdjust="spacingAndGlyphs">DPR.CATG:</text>
<text x="335.86" y="61.70" font-size="12.0" textLength="63.98" lengthAdjust="spacingAndGlyphs">DPR.TYPE:</text>
<text x="335.86" y="79.80" font-size="12.0" textLength="66.98" lengthAdjust="spacingAndGlyphs">DPR.TECH:</text>
<text x="335.46" y="96.60" font-size="12.0" textLength="44.08" lengthAdjust="spacingAndGlyphs">TPL.ID:</text>
<text x="404.86" y="44.80" font-size="12.0" textLength="35.78" lengthAdjust="spacingAndGlyphs">CALIB</text>
<text x="404.56" y="61.80" font-size="12.0" textLength="108.08" lengthAdjust="spacingAndGlyphs">DARK,DETCHECK</text>
<text x="404.56" y="79.60" font-size="12.0" textLength="41.28" lengthAdjust="spacingAndGlyphs">IMAGE</text>
<text x="404.56" y="96.50" font-size="12.0" textLength="145.38" lengthAdjust="spacingAndGlyphs">HAWKI_img_tec_DetLin</text>
<text x="628.87" y="42.90" font-size="10.4" textLength="68.76" lengthAdjust="spacingAndGlyphs" class="md">DET.RSPEED:</text>
<text x="759.77" y="42.90" font-size="10.4" textLength="7.26" lengthAdjust="spacingAndGlyphs" class="md">8</text>
<line x1="106.00" y1="746.00" x2="106.00" y2="752.60" stroke="#262626" stroke-width="1.6"/>
<text x="102.82" y="769.00" font-size="10.0" textLength="6.36" lengthAdjust="spacingAndGlyphs" class="sm">0</text>
<line x1="175.64" y1="746.00" x2="175.64" y2="752.60" stroke="#262626" stroke-width="1.6"/>
<text x="166.10" y="769.00" font-size="10.0" textLength="19.08" lengthAdjust="spacingAndGlyphs" class="sm">250</text>
<line x1="245.28" y1="746.00" x2="245.28" y2="752.60" stroke="#262626" stroke-width="1.6"/>
<text x="235.74" y="769.00" font-size="10.0" textLength="19.08" lengthAdjust="spacingAndGlyphs" class="sm">500</text>
<line x1="314.91" y1="746.00" x2="314.91" y2="752.60" stroke="#262626" stroke-width="1.6"/>
<text x="305.37" y="769.00" font-size="10.0" textLength="19.08" lengthAdjust="spacingAndGlyphs" class="sm">750</text>
<line x1="384.55" y1="746.00" x2="384.55" y2="752.60" stroke="#262626" stroke-width="1.6"/>
<text x="371.83" y="769.00" font-size="10.0" textLength="25.44" lengthAdjust="spacingAndGlyphs" class="sm">1000</text>
<line x1="454.19" y1="746.00" x2="454.19" y2="752.60" stroke="#262626" stroke-width="1.6"/>
<text x="441.47" y="769.00" font-size="10.0" textLength="25.44" lengthAdjust="spacingAndGlyphs" class="sm">1250</text>
<line x1="523.83" y1="746.00" x2="523.83" y2="752.60" stroke="#262626" stroke-width="1.6"/>
<text x="511.11" y="769.00" font-size="10.0" textLength="25.44" lengthAdjust="spacingAndGlyphs" class="sm">1500</text>
<line x1="593.46" y1="746.00" x2="593.46" y2="752.60" stroke="#262626" stroke-width="1.6"/>
<text x="580.74" y="769.00" font-size="10.0" textLength="25.44" lengthAdjust="spacingAndGlyphs" class="sm">1750</text>
<line x1="663.10" y1="746.00" x2="663.10" y2="752.60" stroke="#262626" stroke-width="1.6"/>
<text x="650.38" y="769.00" font-size="10.0" textLength="25.44" lengthAdjust="spacingAndGlyphs" class="sm">2000</text>
<line x1="99.30" y1="745.90" x2="105.90" y2="745.90" stroke="#262626" stroke-width="1.6"/>
<text x="85.34" y="749.60" font-size="10.0" textLength="6.36" lengthAdjust="spacingAndGlyphs" class="sm">0</text>
<line x1="99.30" y1="676.26" x2="105.90" y2="676.26" stroke="#262626" stroke-width="1.6"/>
<text x="72.62" y="679.96" font-size="10.0" textLength="19.08" lengthAdjust="spacingAndGlyphs" class="sm">250</text>
<line x1="99.30" y1="606.62" x2="105.90" y2="606.62" stroke="#262626" stroke-width="1.6"/>
<text x="72.62" y="610.33" font-size="10.0" textLength="19.08" lengthAdjust="spacingAndGlyphs" class="sm">500</text>
<line x1="99.30" y1="536.99" x2="105.90" y2="536.99" stroke="#262626" stroke-width="1.6"/>
<text x="72.62" y="540.69" font-size="10.0" textLength="19.08" lengthAdjust="spacingAndGlyphs" class="sm">750</text>
<line x1="99.30" y1="467.35" x2="105.90" y2="467.35" stroke="#262626" stroke-width="1.6"/>
<text x="66.26" y="471.05" font-size="10.0" textLength="25.44" lengthAdjust="spacingAndGlyphs" class="sm">1000</text>
<line x1="99.30" y1="397.71" x2="105.90" y2="397.71" stroke="#262626" stroke-width="1.6"/>
<text x="66.26" y="401.41" font-size="10.0" textLength="25.44" lengthAdjust="spacingAndGlyphs" class="sm">1250</text>
<line x1="99.30" y1="328.07" x2="105.90" y2="328.07" stroke="#262626" stroke-width="1.6"/>
<text x="66.26" y="331.77" font-size="10.0" textLength="25.44" lengthAdjust="spacingAndGlyphs" class="sm">1500</text>
<line x1="99.30" y1="258.44" x2="105.90" y2="258.44" stroke="#262626" stroke-width="1.6"/>
<text x="66.26" y="262.14" font-size="10.0" textLength="25.44" lengthAdjust="spacingAndGlyphs" class="sm">1750</text>
<line x1="99.30" y1="188.80" x2="105.90" y2="188.80" stroke="#262626" stroke-width="1.6"/>
<text x="66.26" y="192.50" font-size="10.0" textLength="25.44" lengthAdjust="spacingAndGlyphs" class="sm">2000</text>
<text x="387.41" y="786.80" font-size="10.6" textLength="8.18" lengthAdjust="spacingAndGlyphs" class="sm">X</text>
<text class="sm" transform="translate(48.90,461.00) rotate(-90)" x="-3.64" y="3.90" font-size="10.6" textLength="7.28" lengthAdjust="spacingAndGlyphs">Y</text>
<line x1="391.40" y1="170.20" x2="391.40" y2="752.00" stroke="#0000ff" stroke-width="1.2"/>
<line x1="100.00" y1="461.20" x2="682.90" y2="461.20" stroke="#0000ff" stroke-width="1.2"/>
<line x1="747.10" y1="173.70" x2="753.70" y2="173.70" stroke="#262626" stroke-width="1.6"/>
<text x="761.70" y="177.70" font-size="10.0" textLength="15.90" lengthAdjust="spacingAndGlyphs" class="sm">7.5</text>
<line x1="747.10" y1="261.57" x2="753.70" y2="261.57" stroke="#262626" stroke-width="1.6"/>
<text x="761.70" y="265.57" font-size="10.0" textLength="15.90" lengthAdjust="spacingAndGlyphs" class="sm">5.0</text>
<line x1="747.10" y1="349.45" x2="753.70" y2="349.45" stroke="#262626" stroke-width="1.6"/>
<text x="761.70" y="353.45" font-size="10.0" textLength="15.90" lengthAdjust="spacingAndGlyphs" class="sm">2.5</text>
<line x1="747.10" y1="437.32" x2="753.70" y2="437.32" stroke="#262626" stroke-width="1.6"/>
<text x="761.70" y="441.32" font-size="10.0" textLength="15.90" lengthAdjust="spacingAndGlyphs" class="sm">0.0</text>
<line x1="747.10" y1="525.20" x2="753.70" y2="525.20" stroke="#262626" stroke-width="1.6"/>
<text x="762.30" y="529.20" font-size="10.0" textLength="24.78" lengthAdjust="spacingAndGlyphs" class="sm">−2.5</text>
<line x1="747.10" y1="613.08" x2="753.70" y2="613.08" stroke="#262626" stroke-width="1.6"/>
<text x="762.30" y="617.08" font-size="10.0" textLength="24.78" lengthAdjust="spacingAndGlyphs" class="sm">−5.0</text>
<line x1="747.10" y1="700.95" x2="753.70" y2="700.95" stroke="#262626" stroke-width="1.6"/>
<text x="762.30" y="704.95" font-size="10.0" textLength="24.78" lengthAdjust="spacingAndGlyphs" class="sm">−7.5</text>
<line x1="747.10" y1="788.83" x2="753.70" y2="788.83" stroke="#262626" stroke-width="1.6"/>
<text x="762.30" y="792.83" font-size="10.0" textLength="31.14" lengthAdjust="spacingAndGlyphs" class="sm">−10.0</text>
<line x1="904.20" y1="219.72" x2="910.80" y2="219.72" stroke="#262626" stroke-width="1.6"/>
<text x="890.34" y="223.42" font-size="10.0" textLength="6.36" lengthAdjust="spacingAndGlyphs" class="sm">2</text>
<line x1="904.20" y1="194.79" x2="910.80" y2="194.79" stroke="#262626" stroke-width="1.6"/>
<text x="890.34" y="198.49" font-size="10.0" textLength="6.36" lengthAdjust="spacingAndGlyphs" class="sm">3</text>
<line x1="904.20" y1="169.86" x2="910.80" y2="169.86" stroke="#262626" stroke-width="1.6"/>
<text x="890.34" y="173.56" font-size="10.0" textLength="6.36" lengthAdjust="spacingAndGlyphs" class="sm">4</text>
<line x1="904.20" y1="144.93" x2="910.80" y2="144.93" stroke="#262626" stroke-width="1.6"/>
<text x="890.34" y="148.63" font-size="10.0" textLength="6.36" lengthAdjust="spacingAndGlyphs" class="sm">5</text>
<line x1="904.20" y1="120.00" x2="910.80" y2="120.00" stroke="#262626" stroke-width="1.6"/>
<text x="890.34" y="123.70" font-size="10.0" textLength="6.36" lengthAdjust="spacingAndGlyphs" class="sm">6</text>
<line x1="910.90" y1="232.90" x2="910.90" y2="239.50" stroke="#262626" stroke-width="1.6"/>
<line x1="958.00" y1="232.90" x2="958.00" y2="239.50" stroke="#262626" stroke-width="1.6"/>
<line x1="1005.10" y1="232.90" x2="1005.10" y2="239.50" stroke="#262626" stroke-width="1.6"/>
<line x1="1052.20" y1="232.90" x2="1052.20" y2="239.50" stroke="#262626" stroke-width="1.6"/>
<line x1="1099.30" y1="232.90" x2="1099.30" y2="239.50" stroke="#262626" stroke-width="1.6"/>
<line x1="1146.40" y1="232.90" x2="1146.40" y2="239.50" stroke="#262626" stroke-width="1.6"/>
<text x="902.74" y="256.10" font-size="10.0" textLength="16.33" lengthAdjust="spacingAndGlyphs" class="sm">-60</text>
<text x="996.94" y="256.10" font-size="10.0" textLength="16.33" lengthAdjust="spacingAndGlyphs" class="sm">-20</text>
<text x="1092.94" y="256.10" font-size="10.0" textLength="12.72" lengthAdjust="spacingAndGlyphs" class="sm">20</text>
<text x="1030.61" y="273.80" font-size="10.6" textLength="34.58" lengthAdjust="spacingAndGlyphs" class="sm">counts</text>
<text class="sm" transform="translate(877.50,173.90) rotate(-90)" x="-36.39" y="0.00" font-size="10.6" textLength="72.78" lengthAdjust="spacingAndGlyphs">log frequency</text>
<text class="sm" transform="translate(1194.40,174.60) rotate(90)" x="-47.04" y="0.00" font-size="10.6" textLength="94.08" lengthAdjust="spacingAndGlyphs">histogram (detail)</text>
<line x1="904.40" y1="404.50" x2="911.00" y2="404.50" stroke="#262626" stroke-width="1.6"/>
<text x="890.34" y="408.20" font-size="10.0" textLength="6.36" lengthAdjust="spacingAndGlyphs" class="sm">0</text>
<line x1="904.40" y1="370.60" x2="911.00" y2="370.60" stroke="#262626" stroke-width="1.6"/>
<text x="890.34" y="374.30" font-size="10.0" textLength="6.36" lengthAdjust="spacingAndGlyphs" class="sm">2</text>
<line x1="904.40" y1="336.70" x2="911.00" y2="336.70" stroke="#262626" stroke-width="1.6"/>
<text x="890.34" y="340.40" font-size="10.0" textLength="6.36" lengthAdjust="spacingAndGlyphs" class="sm">4</text>
<line x1="904.40" y1="302.80" x2="911.00" y2="302.80" stroke="#262626" stroke-width="1.6"/>
<text x="890.34" y="306.50" font-size="10.0" textLength="6.36" lengthAdjust="spacingAndGlyphs" class="sm">6</text>
<line x1="929.10" y1="404.60" x2="929.10" y2="411.20" stroke="#262626" stroke-width="1.6"/>
<line x1="966.30" y1="404.60" x2="966.30" y2="411.20" stroke="#262626" stroke-width="1.6"/>
<line x1="1003.50" y1="404.60" x2="1003.50" y2="411.20" stroke="#262626" stroke-width="1.6"/>
<line x1="1040.70" y1="404.60" x2="1040.70" y2="411.20" stroke="#262626" stroke-width="1.6"/>
<line x1="1077.90" y1="404.60" x2="1077.90" y2="411.20" stroke="#262626" stroke-width="1.6"/>
<line x1="1115.10" y1="404.60" x2="1115.10" y2="411.20" stroke="#262626" stroke-width="1.6"/>
<line x1="1152.30" y1="404.60" x2="1152.30" y2="411.20" stroke="#262626" stroke-width="1.6"/>
<text x="925.92" y="428.10" font-size="10.0" textLength="6.36" lengthAdjust="spacingAndGlyphs" class="sm">0</text>
<text x="987.60" y="428.10" font-size="10.0" textLength="31.80" lengthAdjust="spacingAndGlyphs" class="sm">20000</text>
<text x="1062.00" y="428.10" font-size="10.0" textLength="31.80" lengthAdjust="spacingAndGlyphs" class="sm">40000</text>
<text x="1136.40" y="428.10" font-size="10.0" textLength="31.80" lengthAdjust="spacingAndGlyphs" class="sm">60000</text>
<text x="1030.61" y="445.70" font-size="10.6" textLength="34.58" lengthAdjust="spacingAndGlyphs" class="sm">counts</text>
<text class="sm" transform="translate(877.50,345.90) rotate(-90)" x="-35.94" y="0.00" font-size="10.6" textLength="71.88" lengthAdjust="spacingAndGlyphs">log frequency</text>
<text class="sm" transform="translate(1194.40,349.00) rotate(90)" x="-40.59" y="0.00" font-size="10.6" textLength="81.18" lengthAdjust="spacingAndGlyphs">histogram (full)</text>
<line x1="904.70" y1="523.50" x2="911.30" y2="523.50" stroke="#262626" stroke-width="1.6"/>
<text x="884.18" y="527.20" font-size="10.0" textLength="12.72" lengthAdjust="spacingAndGlyphs" class="sm">50</text>
<line x1="904.70" y1="549.25" x2="911.30" y2="549.25" stroke="#262626" stroke-width="1.6"/>
<text x="884.18" y="552.95" font-size="10.0" textLength="12.72" lengthAdjust="spacingAndGlyphs" class="sm">25</text>
<line x1="904.70" y1="575.00" x2="911.30" y2="575.00" stroke="#262626" stroke-width="1.6"/>
<text x="890.54" y="578.70" font-size="10.0" textLength="6.36" lengthAdjust="spacingAndGlyphs" class="sm">0</text>
<line x1="904.70" y1="600.75" x2="911.30" y2="600.75" stroke="#262626" stroke-width="1.6"/>
<text x="875.80" y="604.45" font-size="10.0" textLength="21.10" lengthAdjust="spacingAndGlyphs" class="sm">−25</text>
<line x1="904.70" y1="626.50" x2="911.30" y2="626.50" stroke="#262626" stroke-width="1.6"/>
<text x="875.80" y="630.20" font-size="10.0" textLength="21.10" lengthAdjust="spacingAndGlyphs" class="sm">−50</text>
<line x1="911.80" y1="636.20" x2="911.80" y2="642.80" stroke="#262626" stroke-width="1.6"/>
<text x="908.62" y="659.80" font-size="10.0" textLength="6.36" lengthAdjust="spacingAndGlyphs" class="sm">0</text>
<line x1="978.10" y1="636.20" x2="978.10" y2="642.80" stroke="#262626" stroke-width="1.6"/>
<text x="968.56" y="659.80" font-size="10.0" textLength="19.08" lengthAdjust="spacingAndGlyphs" class="sm">500</text>
<line x1="1044.40" y1="636.20" x2="1044.40" y2="642.80" stroke="#262626" stroke-width="1.6"/>
<text x="1031.68" y="659.80" font-size="10.0" textLength="25.44" lengthAdjust="spacingAndGlyphs" class="sm">1000</text>
<line x1="1110.70" y1="636.20" x2="1110.70" y2="642.80" stroke="#262626" stroke-width="1.6"/>
<text x="1097.98" y="659.80" font-size="10.0" textLength="25.44" lengthAdjust="spacingAndGlyphs" class="sm">1500</text>
<line x1="1177.00" y1="636.20" x2="1177.00" y2="642.80" stroke="#262626" stroke-width="1.6"/>
<text x="1164.28" y="659.80" font-size="10.0" textLength="25.44" lengthAdjust="spacingAndGlyphs" class="sm">2000</text>
<text x="1043.66" y="677.80" font-size="10.6" textLength="7.88" lengthAdjust="spacingAndGlyphs" class="sm">X</text>
<line x1="904.70" y1="695.40" x2="911.30" y2="695.40" stroke="#262626" stroke-width="1.6"/>
<text x="884.18" y="699.10" font-size="10.0" textLength="12.72" lengthAdjust="spacingAndGlyphs" class="sm">50</text>
<line x1="904.70" y1="721.15" x2="911.30" y2="721.15" stroke="#262626" stroke-width="1.6"/>
<text x="884.18" y="724.85" font-size="10.0" textLength="12.72" lengthAdjust="spacingAndGlyphs" class="sm">25</text>
<line x1="904.70" y1="746.90" x2="911.30" y2="746.90" stroke="#262626" stroke-width="1.6"/>
<text x="890.54" y="750.60" font-size="10.0" textLength="6.36" lengthAdjust="spacingAndGlyphs" class="sm">0</text>
<line x1="904.70" y1="772.65" x2="911.30" y2="772.65" stroke="#262626" stroke-width="1.6"/>
<text x="875.80" y="776.35" font-size="10.0" textLength="21.10" lengthAdjust="spacingAndGlyphs" class="sm">−25</text>
<line x1="904.70" y1="798.40" x2="911.30" y2="798.40" stroke="#262626" stroke-width="1.6"/>
<text x="875.80" y="802.10" font-size="10.0" textLength="21.10" lengthAdjust="spacingAndGlyphs" class="sm">−50</text>
<line x1="911.80" y1="808.60" x2="911.80" y2="815.20" stroke="#262626" stroke-width="1.6"/>
<text x="908.62" y="832.20" font-size="10.0" textLength="6.36" lengthAdjust="spacingAndGlyphs" class="sm">0</text>
<line x1="978.10" y1="808.60" x2="978.10" y2="815.20" stroke="#262626" stroke-width="1.6"/>
<text x="968.56" y="832.20" font-size="10.0" textLength="19.08" lengthAdjust="spacingAndGlyphs" class="sm">500</text>
<line x1="1044.40" y1="808.60" x2="1044.40" y2="815.20" stroke="#262626" stroke-width="1.6"/>
<text x="1031.68" y="832.20" font-size="10.0" textLength="25.44" lengthAdjust="spacingAndGlyphs" class="sm">1000</text>
<line x1="1110.70" y1="808.60" x2="1110.70" y2="815.20" stroke="#262626" stroke-width="1.6"/>
<text x="1097.98" y="832.20" font-size="10.0" textLength="25.44" lengthAdjust="spacingAndGlyphs" class="sm">1500</text>
<line x1="1177.00" y1="808.60" x2="1177.00" y2="815.20" stroke="#262626" stroke-width="1.6"/>
<text x="1164.28" y="832.20" font-size="10.0" textLength="25.44" lengthAdjust="spacingAndGlyphs" class="sm">2000</text>
<text x="1043.66" y="850.20" font-size="10.6" textLength="7.88" lengthAdjust="spacingAndGlyphs" class="sm">Y</text>
<text class="sm" transform="translate(863.10,577.80) rotate(-90)" x="-17.24" y="0.00" font-size="10.6" textLength="34.48" lengthAdjust="spacingAndGlyphs">counts</text>
<text class="sm" transform="translate(863.10,750.80) rotate(-90)" x="-16.89" y="0.00" font-size="10.6" textLength="33.78" lengthAdjust="spacingAndGlyphs">counts</text>
<text class="sm" transform="translate(1194.10,575.40) rotate(90)" x="-19.64" y="0.00" font-size="10.6" textLength="39.28" lengthAdjust="spacingAndGlyphs">cut in x</text>
<text class="sm" transform="translate(1194.50,749.00) rotate(90)" x="-19.79" y="0.00" font-size="10.6" textLength="39.58" lengthAdjust="spacingAndGlyphs">cut in y</text>
<text x="5.24" y="864.00" font-size="10.8" textLength="174.51" lengthAdjust="spacingAndGlyphs">powered by QC: www.eso.org/HC</text>
<text x="934.34" y="864.00" font-size="10.8" textLength="304.61" lengthAdjust="spacingAndGlyphs">created by qc_rawdisp.py v1.2.3 on 2023-12-11T22:36:13</text>
<text class="sm" x="1136.60" y="531.00" font-size="10.0" textLength="40.80" lengthAdjust="spacingAndGlyphs">y=1024</text>
<text class="sm" x="1136.60" y="703.20" font-size="10.0" textLength="40.80" lengthAdjust="spacingAndGlyphs">x=1024</text>
</svg>
<script>
(function(){
var c=document.getElementById('hm');var ctx=c.getContext('2d');
var w=c.width,h=c.height;var im=ctx.createImageData(w,h);var d=im.data;
var s=987654321;function rnd(){s^=s<<13;s>>>=0;s^=s>>>17;s^=s<<5;s>>>=0;return s/4294967296;}
var spare=null;function g(){if(spare!==null){var t=spare;spare=null;return t;}var u=rnd()||1e-9,v=rnd();var r=Math.sqrt(-2*Math.log(u));spare=r*Math.sin(6.2831853*v);return r*Math.cos(6.2831853*v);}
var VMIN=-10.566,VR=19.796;
function G(d,sg){return Math.exp(-d*d/(2*sg*sg));}
function cl(x){return x<0?0:(x>1?1:x);}
function pl(P,x){if(x<=P[0])return P[1];for(var i=2;i<P.length;i+=2){if(x<=P[i]){var f=(x-P[i-2])/(P[i]-P[i-2]);return P[i-1]+f*(P[i+1]-P[i-1]);}}return P[P.length-1];}
// coordinates in src px
var BASE=[176,-4.8, 200,-4.0, 230,-3.6, 260,-3.0, 300,-2.1, 340,-1.5, 420,-0.8, 520,-0.3, 620,0.0, 720,0.3];
var FTOP=[106,196, 130,194, 160,189.5, 200,190.5, 280,194, 360,200, 400,199, 500,201, 560,196.5, 610,192, 640,193, 676,193];
var BTOP=[106,723, 141,723, 250,721, 390,720, 450,716.5, 520,715.5, 567,723.5, 611,728, 676,729];
var HL=[[216.2,7.5,106,440],[216.2,3.0,440,676],[259.5,2.2,106,676],[236,1.6,106,676],[298,1.6,106,676],[383.8,7.5,106,330],[383.8,2.5,330,676],[411.6,7.0,106,390],[411.6,2.5,390,676],[527.5,6.0,106,676],[330,1.0,106,676],[363,1.0,106,676],[436,1.0,106,676],[470,0.9,106,676],[500,0.9,106,676],[560,0.9,106,676],[590,0.9,106,676]];
function base(X,Y){
  var b=pl(BASE,Y);
  var ft=pl(FTOP,X);
  // above frame dark
  if(Y<ft){ b-=2.6*cl((ft-Y)/8); }
  if(Y<186) b-=1.2*cl((186-Y)/10);
  // top-left black corner
  var dc=Math.hypot(Math.max(0,X-110),Math.max(0,Y-180)); b-=9*cl(1.25-dc/22);
  // top-right dark corner
  var dr=Math.hypot(Math.max(0,668-X),Math.max(0,Y-182)); b-=3.5*cl(1-dr/20);
  // right strip beyond frame darker
  if(X>656) b-=1.2*cl((X-656)/6)*cl((460-Y)/200);
  // frame
  var R=14,L=123,Rr=650.5;
  var a=0;
  if(X<L+R && Y<ft+R){ a=G(Math.hypot(X-(L+R),Y-(ft+R))-R,3.8)*(X<L+R&&Y<ft+R?1:0); }
  else if(X>Rr-R && Y<ft+R){ a=G(Math.hypot(X-(Rr-R),Y-(ft+R))-R,4.0); }
  else {
    a=G(Y-ft,4.6);
    if(Y>ft){ a=Math.max(a, G(X-L,1.9)*(0.15+0.75*cl((300-Y)/100))*cl((600-Y)/100), G(X-Rr,3.6)*(0.35+0.65*cl((330-Y)/110))*cl((520-Y)/200)); }
  }
  b+=6.6*a;
  // under frame darker
  b-=0.8*G(Y-(ft+12),6)*cl((X-L)/8)*cl((Rr-X)/8);
  // bottom band
  var bt=pl(BTOP,X);
  if(X>124 && X<656 && Y>bt-3){
    var k=cl((Y-(bt-3))/4)*cl((656-X)/6)*cl((X-124)/12);
    var top=G(Y-(bt+5),4.2);
    b+=k*(1.6+5.4*top);
    var sx=((X-141.5)%35.8+35.8)%35.8; var ds=Math.min(sx,35.8-sx);
    if(X>134) b-=k*(rnd()<0.6?10:2)*G(ds,0.9);
  }
  // left of J: brighter strip
  if(Y>560) b+=1.5*cl((Y-560)/120)*cl((124-X)/6);
  // left J curve
  if(Y>560 && Y<725){
    var jx=124+(Y>688?(Y-688)*(Y-688)/62:0);
    b+=6.0*cl((Y-560)/60)*G(X-jx,1.7);
  }
  // white vertical line
  if(Y>607 && Y<746 && Math.abs(X-260.5)<0.8) b+=10;
  // horizontal lines
  for(var i=0;i<HL.length;i++){var hl=HL[i]; if(X>hl[2]&&X<hl[3]&&Math.abs(Y-hl[0])<0.55) b+=hl[1]*1.0;}
  // faint vertical lines
  b+=1.2*G(X-177.5,0.6)*cl((540-Y)/200)+1.5*G(X-260.5,0.6)*cl((600-Y)/300)+1.0*G(X-333,0.6)+1.4*G(X-497,0.6)+1.0*G(X-560,0.6);
  // blobs
  b+=6.5*G(Math.hypot((X-428)/1.6,Y-263),3.4);
  b+=5*G(Math.hypot(X-372,Y-298),2.4);
  b+=2.5*G(Math.hypot(X-652,Y-315),3.0);
  return b;
}
for(var py=0;py<h;py++){
  var Y=175.5+py;
  for(var px=0;px<w;px++){
    var X=106.5+px;
    var i=py*w+px;
    var nz=g()*2.4; var rr=rnd(); if(rr<0.07) nz+=Math.abs(g())*6.5; else if(rr<0.085) nz-=Math.abs(g())*5;
    var v=base(X,Y)+nz;
    var t=(v-VMIN)/VR;
    var r,gg,bb;
    if(t<=0){r=0.0416;gg=0;bb=0;} else if(t>=1){r=1;gg=1;bb=1;} else {
    r=t<0.365079?0.0416+t/0.365079*0.9584:1;
    gg=t<0.365079?0:(t<0.746032?(t-0.365079)/0.380953:1);
    bb=t<0.746032?0:(t-0.746032)/0.253968;}
    var j=i*4;d[j]=r*255;d[j+1]=gg*255;d[j+2]=bb*255;d[j+3]=255;
  }
}
ctx.putImageData(im,0,0);
})();
</script>
</body></html>
